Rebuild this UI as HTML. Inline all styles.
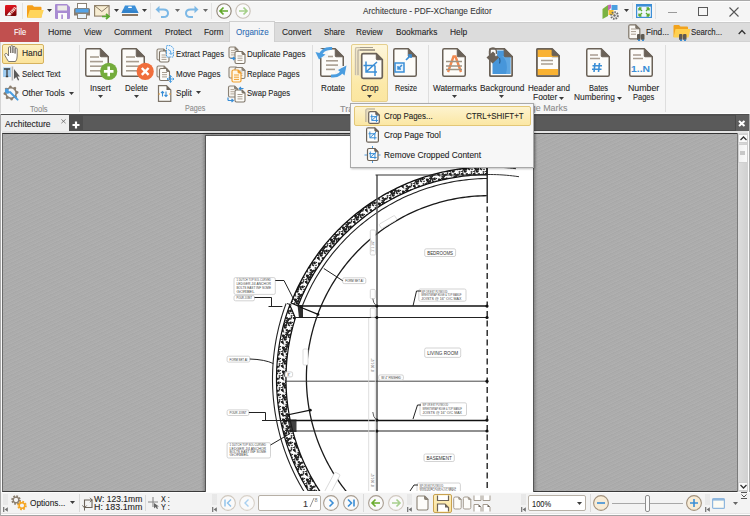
<!DOCTYPE html>
<html><head><meta charset="utf-8"><title>Architecture - PDF-XChange Editor</title><style>*{margin:0;padding:0;box-sizing:border-box}
html,body{width:750px;height:516px;overflow:hidden;background:#f5f5f5}
body{position:relative;font-family:"Liberation Sans",sans-serif;font-size:9.5px;color:#262626}
.a{position:absolute;overflow:visible}
.t{position:absolute;white-space:nowrap;transform-origin:0 50%;-webkit-text-stroke:0.1px currentColor}
</style></head><body>
<div class="a" style="left:0;top:0;width:750px;height:22px;background:#f5f5f5;border-top:1px solid #a9a9a9"></div><div class="a" style="left:0;top:1px;width:750px;height:1px;background:#fdfdfd"></div><div class="a" style="left:0;top:21px;width:750px;height:1px;background:#fdfdfd"></div><svg class="a" style="left:5px;top:5px;" width="12" height="11" viewBox="0 0 12 11"><defs><linearGradient id="gapp" x1="0" y1="0" x2="0.3" y2="1"><stop offset="0" stop-color="#e8161e"/><stop offset="0.55" stop-color="#c0101a"/><stop offset="1" stop-color="#7a0808"/></linearGradient></defs><rect x="0" y="0" width="11.5" height="11" rx="1.3" fill="url(#gapp)"/><path d="M5 9L11 2.5" stroke="#f3d9cf" stroke-width="2.6" stroke-dasharray="1.2 0.6"/><path d="M3.5 8.5L9.5 2" stroke="#fff" stroke-width="0.8" opacity="0.7"/><path d="M1.5 10.5L4.2 7.2L6 10.3Z" fill="#fff"/></svg><div class="a" style="left:22px;top:3px;width:1px;height:16px;background:#e2e2e2"></div><svg class="a" style="left:27px;top:5px;" width="17" height="13" viewBox="0 0 17 13"><path d="M0 1.2Q0 0.2 1 0.2H5.5L7 1.7H13.5Q14.5 1.7 14.5 2.7V12.5H0Z" fill="#f59f1a"/><path d="M0.3 12.7L2.8 5H16.8L14.2 12.7Z" fill="#ffd55a"/></svg><svg class="a" style="left:46.5px;top:9.0px;" width="5" height="3" viewBox="0 0 5 3"><path d="M0 0H5L2.5 3Z" fill="#3c3c3c"/></svg><svg class="a" style="left:55px;top:4px;" width="15" height="15" viewBox="0 0 15 15"><path d="M0 1Q0 0 1 0H12L15 3V14Q15 15 14 15H1Q0 15 0 14Z" fill="#a88bd2"/><rect x="2.5" y="1.5" width="9.5" height="5" fill="#ecebe6"/><rect x="3" y="9" width="9" height="6" fill="#fbfbfb"/><rect x="6.3" y="10.5" width="1.6" height="4.5" fill="#a88bd2"/></svg><svg class="a" style="left:74px;top:3px;" width="16" height="16" viewBox="0 0 16 16"><rect x="3.5" y="0.5" width="9" height="5" fill="#fff" stroke="#8a8276" stroke-width="1"/><path d="M0 6.5Q0 5 1.5 5H14.5Q16 5 16 6.5V12.5H0Z" fill="#877d70"/><rect x="1.5" y="5.8" width="13" height="3.7" fill="#53a3e8"/><rect x="3.5" y="10.5" width="9" height="5" fill="#e8f2fa" stroke="#8a8276" stroke-width="1"/></svg><svg class="a" style="left:94px;top:5px;" width="17" height="14" viewBox="0 0 17 14"><rect x="0.6" y="0.6" width="14.5" height="10.5" fill="#f7edd2" stroke="#8c7d66" stroke-width="1.1"/><path d="M0.8 0.8L7.85 6.5L14.9 0.8" fill="none" stroke="#8c7d66" stroke-width="1"/><path d="M8 11.5H14.5M12 9L15 11.5L12 14" fill="none" stroke="#5aaa30" stroke-width="1.7"/></svg><svg class="a" style="left:113.5px;top:9.0px;" width="5" height="3" viewBox="0 0 5 3"><path d="M0 0H5L2.5 3Z" fill="#3c3c3c"/></svg><svg class="a" style="left:121px;top:5px;" width="18" height="12" viewBox="0 0 18 12"><path d="M4 0.5H14L17.5 8H0.5Z" fill="#3b8fd8"/><path d="M7.5 1.5H10.5L11 3H7Z" fill="#fff"/><path d="M2 4.5L0.5 8H17.5L16.5 6Z" fill="#2f7cc4" opacity="0.7"/><rect x="1" y="9" width="16" height="2" fill="#8a7560"/></svg><svg class="a" style="left:141.5px;top:9.0px;" width="5" height="3" viewBox="0 0 5 3"><path d="M0 0H5L2.5 3Z" fill="#3c3c3c"/></svg><div class="a" style="left:150px;top:3px;width:1px;height:16px;background:#e2e2e2"></div><svg class="a" style="left:155px;top:5px;" width="15" height="13" viewBox="0 0 15 13"><path d="M3 4.5H8.5Q13 4.5 13 8.2Q13 12 8.5 12H6" fill="none" stroke="#7cb8e6" stroke-width="2"/><path d="M0.5 4.5L4.5 0.8V8.2Z" fill="#7cb8e6"/></svg><svg class="a" style="left:174.5px;top:9.0px;" width="5" height="3" viewBox="0 0 5 3"><path d="M0 0H5L2.5 3Z" fill="#6a6a6a"/></svg><svg class="a" style="left:184px;top:5px;" width="15" height="13" viewBox="0 0 15 13"><path d="M12 4.5H6.5Q2 4.5 2 8.2Q2 12 6.5 12H9" fill="none" stroke="#7cb8e6" stroke-width="2"/><path d="M14.5 4.5L10.5 0.8V8.2Z" fill="#7cb8e6"/></svg><svg class="a" style="left:202.5px;top:9.0px;" width="5" height="3" viewBox="0 0 5 3"><path d="M0 0H5L2.5 3Z" fill="#6a6a6a"/></svg><div class="a" style="left:211px;top:3px;width:1px;height:16px;background:#e2e2e2"></div><svg class="a" style="left:216px;top:3px;" width="16" height="16" viewBox="0 0 16 16"><circle cx="8" cy="8" r="7.2" fill="#fafafa" stroke="#8f8476" stroke-width="1.1"/><path d="M4 8H12M7.5 4.5L4 8L7.5 11.5" fill="none" stroke="#62a82a" stroke-width="1.7"/></svg><svg class="a" style="left:235px;top:3px;" width="16" height="16" viewBox="0 0 16 16"><circle cx="8" cy="8" r="7.2" fill="#fafafa" stroke="#c9c1b8" stroke-width="1.1"/><path d="M4 8H12M8.5 4.5L12 8L8.5 11.5" fill="none" stroke="#a6d08a" stroke-width="1.7"/></svg><div class="t" style="left:362.70px;top:4.91px;font-size:9.5px;line-height:11.40px;color:#3a3a3a;transform:scaleX(0.8674);">Architecture - PDF-XChange Editor</div><svg class="a" style="left:602px;top:4px;" width="18" height="16" viewBox="0 0 18 16"><path d="M0.5 5L6 1V12L0.5 15Z" fill="#7bb342"/><path d="M6 1L9 0.5V4L6 7Z" fill="#c86ab0"/><rect x="9.5" y="1" width="6" height="5" fill="#4a9ee0"/><rect x="6.5" y="6" width="5" height="5" fill="#f5c030"/><circle cx="12.5" cy="11.5" r="3.3" fill="none" stroke="#6b6b6b" stroke-width="2" stroke-dasharray="1.5 1"/><circle cx="12.5" cy="11.5" r="1.2" fill="#6b6b6b"/></svg><svg class="a" style="left:623.5px;top:8.5px;" width="5" height="3" viewBox="0 0 5 3"><path d="M0 0H5L2.5 3Z" fill="#3c3c3c"/></svg><div class="a" style="left:632px;top:3px;width:1px;height:16px;background:#e2e2e2"></div><svg class="a" style="left:636px;top:4px;" width="16" height="14" viewBox="0 0 16 14"><rect x="0.6" y="0.6" width="14.8" height="12.8" fill="#eef6fc" stroke="#3c8ed6" stroke-width="1.2"/><rect x="0.6" y="0.6" width="14.8" height="2" fill="#3c8ed6"/><path d="M3 4L6 7M3 4H5.5M3 4V6.5M13 4L10 7M13 4H10.5M13 4V6.5M3 12L6 9M3 12H5.5M3 12V9.5M13 12L10 9M13 12H10.5M13 12V9.5" stroke="#5aaa30" stroke-width="1.4" fill="none"/></svg><div class="a" style="left:655px;top:3px;width:1px;height:16px;background:#e2e2e2"></div><div class="a" style="left:668px;top:12px;width:9px;height:1px;background:#9a9a9a"></div><div class="a" style="left:698px;top:7px;width:10px;height:9px;border:1px solid #5a5a5a"></div><svg class="a" style="left:729px;top:7px;" width="10" height="10" viewBox="0 0 10 10"><path d="M0.5 0.5L9.5 9.5M9.5 0.5L0.5 9.5" stroke="#555" stroke-width="1.1"/></svg><div class="a" style="left:0;top:22px;width:750px;height:20px;background:#dcdcdc;border-top:1px solid #cbcbcb;border-bottom:1px solid #d2d2d2"></div><div class="a" style="left:0;top:22px;width:39px;height:20px;background:#c1504f"></div><div class="t" style="left:13.90px;top:26.01px;font-size:9.5px;line-height:11.40px;color:#ffffff;transform:scaleX(0.7970);">File</div><div class="a" style="left:229px;top:21px;width:46px;height:22px;background:#f5f5f5;border:1px solid #cfcfcf;border-bottom:none"></div><div class="t" style="left:47.70px;top:26.01px;font-size:9.5px;line-height:11.40px;color:#262626;transform:scaleX(0.9234);">Home</div><div class="t" style="left:83.60px;top:26.01px;font-size:9.5px;line-height:11.40px;color:#262626;transform:scaleX(0.8619);">View</div><div class="t" style="left:113.90px;top:26.01px;font-size:9.5px;line-height:11.40px;color:#262626;transform:scaleX(0.9155);">Comment</div><div class="t" style="left:164.50px;top:26.01px;font-size:9.5px;line-height:11.40px;color:#262626;transform:scaleX(0.8805);">Protect</div><div class="t" style="left:203.60px;top:26.01px;font-size:9.5px;line-height:11.40px;color:#262626;transform:scaleX(0.8753);">Form</div><div class="t" style="left:281.70px;top:26.01px;font-size:9.5px;line-height:11.40px;color:#262626;transform:scaleX(0.8808);">Convert</div><div class="t" style="left:323.50px;top:26.01px;font-size:9.5px;line-height:11.40px;color:#262626;transform:scaleX(0.8205);">Share</div><div class="t" style="left:356.30px;top:26.01px;font-size:9.5px;line-height:11.40px;color:#262626;transform:scaleX(0.8572);">Review</div><div class="t" style="left:395.50px;top:26.01px;font-size:9.5px;line-height:11.40px;color:#262626;transform:scaleX(0.8713);">Bookmarks</div><div class="t" style="left:449.70px;top:26.01px;font-size:9.5px;line-height:11.40px;color:#262626;transform:scaleX(0.8854);">Help</div><div class="t" style="left:236.40px;top:26.01px;font-size:9.5px;line-height:11.40px;color:#2f6fb6;transform:scaleX(0.8457);">Organize</div><svg class="a" style="left:628px;top:24px;" width="18" height="17" viewBox="0 0 18 17"><path d="M0.8,2.3 Q0.8,0.8 2.3,0.8 H7.800000000000001 L11.8,4.8 V13.3 Q11.8,14.8 10.3,14.8 H2.3 Q0.8,14.8 0.8,13.3 Z" fill="#fbf9f5" stroke="#7d7468" stroke-width="1.2" stroke-linejoin="round"/><path d="M7.800000000000001,0.8 L11.8,4.8 H8.600000000000001 Q7.800000000000001,4.8 7.800000000000001,4.0 Z" fill="#7d7468" stroke="#7d7468" stroke-width="1" stroke-linejoin="round"/><path d="M3,5.0H8" stroke="#a89d90" stroke-width="1"/><path d="M3,7.6H8" stroke="#a89d90" stroke-width="1"/><path d="M3,10.2H8" stroke="#a89d90" stroke-width="1"/><rect x="9" y="10" width="3.5" height="6" rx="1" fill="#5f5a52"/><rect x="13" y="10" width="3.5" height="6" rx="1" fill="#5f5a52"/><rect x="10" y="15.5" width="2" height="1.5" fill="#3a8ed6"/><rect x="14" y="15.5" width="2" height="1.5" fill="#3a8ed6"/></svg><div class="t" style="left:646.30px;top:25.71px;font-size:9.5px;line-height:11.40px;color:#262626;transform:scaleX(0.8750);">Find...</div><svg class="a" style="left:673px;top:24px;" width="18" height="17" viewBox="0 0 18 17"><path d="M0.5 2Q0.5 1 1.5 1H6L7.5 2.5H14Q15 2.5 15 3.5V13H0.5Z" fill="#f2a31c"/><path d="M0.5 13.5L2.5 5H17.5L15.5 13.5Z" fill="#ffd04f"/><rect x="6" y="10" width="3.5" height="6" rx="1" fill="#5f5a52"/><rect x="10" y="10" width="3.5" height="6" rx="1" fill="#5f5a52"/><rect x="7" y="15.5" width="2" height="1.5" fill="#3a8ed6"/><rect x="11" y="15.5" width="2" height="1.5" fill="#3a8ed6"/></svg><div class="t" style="left:691.40px;top:25.71px;font-size:9.5px;line-height:11.40px;color:#262626;transform:scaleX(0.8206);">Search...</div><svg class="a" style="left:738px;top:29px;" width="8" height="6" viewBox="0 0 8 6"><path d="M0.7 5L4 1.5L7.3 5" fill="none" stroke="#333" stroke-width="1.3"/></svg><div class="a" style="left:0;top:42px;width:750px;height:72px;background:#f6f6f6;border-bottom:1px solid #fdfdfd;border-left:1px solid #d4d4d4"></div><div class="a" style="left:2px;top:44px;width:42px;height:20px;border:1px solid #d6b25e;border-radius:2px;background:linear-gradient(#fdf1c4,#fbe39a)"></div><svg class="a" style="left:4px;top:45px;" width="15" height="18" viewBox="0 0 15 18"><path d="M4.5 16.5Q2.5 13.5 1 10.5Q0.3 9 1.5 8.5Q2.6 8.2 3.5 9.5L4.5 11V3Q4.5 1.8 5.6 1.8Q6.7 1.8 6.7 3V8V1.8Q6.7 0.6 7.8 0.6Q8.9 0.6 8.9 1.8V8V2.5Q8.9 1.3 10 1.3Q11.1 1.3 11.1 2.5V8.5V4Q11.1 3 12.1 3Q13.2 3 13.2 4V11Q13.2 14.5 11.5 16.5Z" fill="#fff" stroke="#6f6a62" stroke-width="0.9" stroke-linejoin="round"/></svg><div class="t" style="left:21.90px;top:47.41px;font-size:9.5px;line-height:11.40px;color:#262626;transform:scaleX(0.8894);">Hand</div><svg class="a" style="left:2px;top:66px;" width="18" height="15" viewBox="0 0 18 15"><rect x="1" y="1.5" width="8" height="9.5" fill="#9fcbef"/><path d="M2 3H8M5 3V10.5M3.8 10.5H6.2" stroke="#3d3d3d" stroke-width="1.3" fill="none"/><rect x="9.6" y="0.5" width="1.6" height="14" fill="#b9b9b9"/><path d="M12 3V13L14.2 11L16 14.5L17.2 14L15.5 10.5H18Z" fill="#5a5a5a"/></svg><div class="t" style="left:21.90px;top:67.71px;font-size:9.5px;line-height:11.40px;color:#262626;transform:scaleX(0.8294);">Select Text</div><svg class="a" style="left:3px;top:85px;" width="16" height="16" viewBox="0 0 16 16"><path d="M15.36,6.54 L15.50,8.00 L13.79,9.15 L13.45,10.26 L14.24,12.17 L13.30,13.30 L11.28,12.91 L10.26,13.45 L9.46,15.36 L8.00,15.50 L6.85,13.79 L5.74,13.45 L3.83,14.24 L2.70,13.30 L3.09,11.28 L2.55,10.26 L0.64,9.46 L0.50,8.00 L2.21,6.85 L2.55,5.74 L1.76,3.83 L2.70,2.70 L4.72,3.09 L5.74,2.55 L6.54,0.64 L8.00,0.50 L9.15,2.21 L10.26,2.55 L12.17,1.76 L13.30,2.70 L12.91,4.72 L13.45,5.74Z" fill="#8b7f70"/><circle cx="8" cy="8" r="4.4" fill="#f6f6f6"/><path d="M7.2 7.2L14.6 14.6" stroke="#4a9de0" stroke-width="2" stroke-linecap="round"/><path d="M3.6 3.2A2.9 2.9 0 1 0 7.6 6.2L6.2 6.4L5.6 5.6L5.8 4.2Z" fill="#4a9de0"/></svg><div class="t" style="left:21.90px;top:87.01px;font-size:9.5px;line-height:11.40px;color:#262626;transform:scaleX(0.8800);">Other Tools</div><svg class="a" style="left:69.0px;top:92.0px;" width="5" height="3" viewBox="0 0 5 3"><path d="M0 0H5L2.5 3Z" fill="#3c3c3c"/></svg><div class="t" style="left:29.90px;top:102.51px;font-size:9.5px;line-height:11.40px;color:#8c8c8c;transform:scaleX(0.7936);">Tools</div><div class="a" style="left:79px;top:45px;width:1px;height:67px;background:#dedede"></div><svg class="a" style="left:84px;top:47px;" width="34" height="34" viewBox="0 0 34 34"><path d="M1.75,3.25 Q1.75,1.75 3.25,1.75 H16.25 L24.25,9.75 V27.75 Q24.25,29.25 22.75,29.25 H3.25 Q1.75,29.25 1.75,27.75 Z" fill="#fdfcf9" stroke="#6b6258" stroke-width="1.5" stroke-linejoin="round"/><path d="M16.25,1.75 L24.25,9.75 H17.05 Q16.25,9.75 16.25,8.95 Z" fill="#6b6258" stroke="#6b6258" stroke-width="1" stroke-linejoin="round"/><path d="M6,10.0H15" stroke="#a89d90" stroke-width="1.6"/><path d="M6,14.6H19" stroke="#a89d90" stroke-width="1.6"/><path d="M6,19.2H19" stroke="#a89d90" stroke-width="1.6"/><path d="M6,23.799999999999997H19" stroke="#a89d90" stroke-width="1.6"/><circle cx="24.7" cy="24.4" r="8.6" fill="#74ac3c"/><path d="M24.7 19.6V29.2M19.9 24.4H29.5" stroke="#fff" stroke-width="2.6"/></svg><div class="t" style="left:89.70px;top:82.01px;font-size:9.5px;line-height:11.40px;color:#262626;transform:scaleX(0.8712);">Insert</div><svg class="a" style="left:97.5px;top:95.0px;" width="5" height="3" viewBox="0 0 5 3"><path d="M0 0H5L2.5 3Z" fill="#3c3c3c"/></svg><svg class="a" style="left:120px;top:47px;" width="34" height="34" viewBox="0 0 34 34"><path d="M1.75,3.25 Q1.75,1.75 3.25,1.75 H16.25 L24.25,9.75 V27.75 Q24.25,29.25 22.75,29.25 H3.25 Q1.75,29.25 1.75,27.75 Z" fill="#fdfcf9" stroke="#6b6258" stroke-width="1.5" stroke-linejoin="round"/><path d="M16.25,1.75 L24.25,9.75 H17.05 Q16.25,9.75 16.25,8.95 Z" fill="#6b6258" stroke="#6b6258" stroke-width="1" stroke-linejoin="round"/><path d="M6,10.0H15" stroke="#a89d90" stroke-width="1.6"/><path d="M6,14.6H19" stroke="#a89d90" stroke-width="1.6"/><path d="M6,19.2H19" stroke="#a89d90" stroke-width="1.6"/><path d="M6,23.799999999999997H19" stroke="#a89d90" stroke-width="1.6"/><circle cx="25.2" cy="24.4" r="8.6" fill="#f06e3c"/><path d="M21.8 21L28.6 27.8M28.6 21L21.8 27.8" stroke="#fff" stroke-width="2.4"/></svg><div class="t" style="left:125.20px;top:82.01px;font-size:9.5px;line-height:11.40px;color:#262626;transform:scaleX(0.8339);">Delete</div><svg class="a" style="left:134.1px;top:95.0px;" width="5" height="3" viewBox="0 0 5 3"><path d="M0 0H5L2.5 3Z" fill="#3c3c3c"/></svg><svg class="a" style="left:156px;top:45px;" width="18" height="18" viewBox="0 0 18 18"><path d="M1,5.5 Q1,4 2.5,4 H7.5 L10.5,7 V13.5 Q10.5,15 9.0,15 H2.5 Q1,15 1,13.5 Z" fill="#f6f3ee" stroke="#8a8175" stroke-width="1.1" stroke-linejoin="round"/><path d="M7.5,4 L10.5,7 H8.3 Q7.5,7 7.5,6.2 Z" fill="#8a8175" stroke="#8a8175" stroke-width="1" stroke-linejoin="round"/><path d="M3.5,7.5 Q3.5,6 5.0,6 H10.0 L13.0,9 V15.5 Q13.0,17 11.5,17 H5.0 Q3.5,17 3.5,15.5 Z" fill="#fdfcf9" stroke="#7d7468" stroke-width="1.1" stroke-linejoin="round"/><path d="M10.0,6 L13.0,9 H10.8 Q10.0,9 10.0,8.2 Z" fill="#7d7468" stroke="#7d7468" stroke-width="1" stroke-linejoin="round"/><path d="M5.5,10.0H10.5" stroke="#a89d90" stroke-width="1"/><path d="M5.5,12.2H10.5" stroke="#a89d90" stroke-width="1"/><path d="M5.5,14.4H10.5" stroke="#a89d90" stroke-width="1"/><path d="M10.5 1.2Q10.5 0.6 11.1 0.6H14.8L17.4 3.2V11.4Q17.4 12 16.8 12H11.1Q10.5 12 10.5 11.4Z" fill="#eef6fd" stroke="#4a9de0" stroke-width="1" stroke-dasharray="1.6 0.8"/><path d="M12 4.5Q15.5 5 15 9M13.5 8L15 9.6L16.5 8" fill="none" stroke="#4a9de0" stroke-width="0.9"/></svg><div class="t" style="left:175.70px;top:48.11px;font-size:9.5px;line-height:11.40px;color:#262626;transform:scaleX(0.8116);">Extract Pages</div><svg class="a" style="left:156px;top:65px;" width="19" height="18" viewBox="0 0 19 18"><path d="M1,2.5 Q1,1 2.5,1 H8 L11,4 V10.5 Q11,12 9.5,12 H2.5 Q1,12 1,10.5 Z" fill="#f6f3ee" stroke="#8a8175" stroke-width="1.1" stroke-linejoin="round"/><path d="M8,1 L11,4 H8.8 Q8,4 8,3.2 Z" fill="#8a8175" stroke="#8a8175" stroke-width="1" stroke-linejoin="round"/><path d="M3.5,5.0 Q3.5,3.5 5.0,3.5 H10.5 L13.5,6.5 V14.0 Q13.5,15.5 12.0,15.5 H5.0 Q3.5,15.5 3.5,14.0 Z" fill="#fdfcf9" stroke="#7d7468" stroke-width="1.1" stroke-linejoin="round"/><path d="M10.5,3.5 L13.5,6.5 H11.3 Q10.5,6.5 10.5,5.7 Z" fill="#7d7468" stroke="#7d7468" stroke-width="1" stroke-linejoin="round"/><path d="M6,7.5H11" stroke="#a89d90" stroke-width="1"/><path d="M6,9.7H11" stroke="#a89d90" stroke-width="1"/><path d="M6,11.9H11" stroke="#a89d90" stroke-width="1"/><path d="M14.5 10.5V17.5M11 14H18" stroke="#4a9de0" stroke-width="1.1"/><path d="M13.2 11.8L14.5 10.5L15.8 11.8M13.2 16.2L14.5 17.5L15.8 16.2M12.3 12.7L11 14L12.3 15.3M16.7 12.7L18 14L16.7 15.3" fill="none" stroke="#4a9de0" stroke-width="0.9"/></svg><div class="t" style="left:175.70px;top:68.21px;font-size:9.5px;line-height:11.40px;color:#262626;transform:scaleX(0.8408);">Move Pages</div><svg class="a" style="left:157px;top:85px;" width="15" height="17" viewBox="0 0 15 17"><path d="M1.5 0.7H9.5L13.8 5V16.3H1.5Z" fill="#fdfcf9" stroke="#7d7468" stroke-width="1.2"/><path d="M9.5 0.7L13.8 5H9.5Z" fill="#6b6258"/><path d="M5.5 11.5V6.5M4 8L5.5 6.5L7 8M9 6.5V11.5M7.5 10L9 11.5L10.5 10" fill="none" stroke="#3a8ed6" stroke-width="1.1"/><path d="M1.5 9H3M12 9H13.8" stroke="#f0a030" stroke-width="1"/></svg><div class="t" style="left:175.70px;top:87.11px;font-size:9.5px;line-height:11.40px;color:#262626;transform:scaleX(0.8495);">Split</div><svg class="a" style="left:196.1px;top:91.0px;" width="5" height="3" viewBox="0 0 5 3"><path d="M0 0H5L2.5 3Z" fill="#3c3c3c"/></svg><svg class="a" style="left:228px;top:46px;" width="18" height="18" viewBox="0 0 18 18"><path d="M1,2.5 Q1,1 2.5,1 H7 L10,4 V10.5 Q10,12 8.5,12 H2.5 Q1,12 1,10.5 Z" fill="#f6f3ee" stroke="#8a8175" stroke-width="1.1" stroke-linejoin="round"/><path d="M7,1 L10,4 H7.8 Q7,4 7,3.2 Z" fill="#8a8175" stroke="#8a8175" stroke-width="1" stroke-linejoin="round"/><path d="M3,4.5H7" stroke="#b5ab9e" stroke-width="1"/><path d="M3,6.7H7" stroke="#b5ab9e" stroke-width="1"/><path d="M3,8.9H7" stroke="#b5ab9e" stroke-width="1"/><path d="M7,7.0 Q7,5.5 8.5,5.5 H14 L17,8.5 V16.0 Q17,17.5 15.5,17.5 H8.5 Q7,17.5 7,16.0 Z" fill="#fdfcf9" stroke="#7d7468" stroke-width="1.1" stroke-linejoin="round"/><path d="M14,5.5 L17,8.5 H14.8 Q14,8.5 14,7.7 Z" fill="#7d7468" stroke="#7d7468" stroke-width="1" stroke-linejoin="round"/><path d="M9.5,10.0H14.5" stroke="#a89d90" stroke-width="1"/><path d="M9.5,12.2H14.5" stroke="#a89d90" stroke-width="1"/><path d="M9.5,14.4H14.5" stroke="#a89d90" stroke-width="1"/><path d="M2.5 12.5H6.5M5 11L6.8 12.5L5 14" fill="none" stroke="#3a8ed6" stroke-width="1.2"/></svg><div class="t" style="left:246.70px;top:48.11px;font-size:9.5px;line-height:11.40px;color:#262626;transform:scaleX(0.8456);">Duplicate Pages</div><svg class="a" style="left:228px;top:66px;" width="18" height="17" viewBox="0 0 18 17"><path d="M1,2.5 Q1,1 2.5,1 H8 L11,4 V10.5 Q11,12 9.5,12 H2.5 Q1,12 1,10.5 Z" fill="#f6f3ee" stroke="#8a8175" stroke-width="1.1" stroke-linejoin="round"/><path d="M8,1 L11,4 H8.8 Q8,4 8,3.2 Z" fill="#8a8175" stroke="#8a8175" stroke-width="1" stroke-linejoin="round"/><path d="M7,3.0 Q7,1.5 8.5,1.5 H14 L17,4.5 V11.0 Q17,12.5 15.5,12.5 H8.5 Q7,12.5 7,11.0 Z" fill="#f6f3ee" stroke="#8a8175" stroke-width="1.1" stroke-linejoin="round"/><path d="M14,1.5 L17,4.5 H14.8 Q14,4.5 14,3.7 Z" fill="#8a8175" stroke="#8a8175" stroke-width="1" stroke-linejoin="round"/><path d="M9.5,5.0H14.5" stroke="#b5ab9e" stroke-width="1"/><path d="M9.5,7.2H14.5" stroke="#b5ab9e" stroke-width="1"/><path d="M9.5,9.4H14.5" stroke="#b5ab9e" stroke-width="1"/><path d="M4,5.5 Q4,4 5.5,4 H10 L13,7 V14.5 Q13,16 11.5,16 H5.5 Q4,16 4,14.5 Z" fill="#fff6e5" stroke="#f0a030" stroke-width="1.2" stroke-linejoin="round"/><path d="M10,4 L13,7 H10.8 Q10,7 10,6.2 Z" fill="#f0a030" stroke="#f0a030" stroke-width="1" stroke-linejoin="round"/><path d="M6,9.0H11" stroke="#f0a030" stroke-width="1"/><path d="M6,11.2H11" stroke="#f0a030" stroke-width="1"/><path d="M6,13.4H11" stroke="#f0a030" stroke-width="1"/></svg><div class="t" style="left:246.70px;top:68.21px;font-size:9.5px;line-height:11.40px;color:#262626;transform:scaleX(0.8148);">Replace Pages</div><svg class="a" style="left:227px;top:85px;" width="19" height="18" viewBox="0 0 19 18"><path d="M1.5,2.5 Q1.5,1 3.0,1 H7.5 L10.5,4 V10.5 Q10.5,12 9.0,12 H3.0 Q1.5,12 1.5,10.5 Z" fill="#f6f3ee" stroke="#8a8175" stroke-width="1.1" stroke-linejoin="round"/><path d="M7.5,1 L10.5,4 H8.3 Q7.5,4 7.5,3.2 Z" fill="#8a8175" stroke="#8a8175" stroke-width="1" stroke-linejoin="round"/><path d="M3.5,4.5H7.5" stroke="#b5ab9e" stroke-width="1"/><path d="M3.5,6.7H7.5" stroke="#b5ab9e" stroke-width="1"/><path d="M3.5,8.9H7.5" stroke="#b5ab9e" stroke-width="1"/><path d="M8,6.5 Q8,5 9.5,5 H15 L18,8 V15.5 Q18,17 16.5,17 H9.5 Q8,17 8,15.5 Z" fill="#fdfcf9" stroke="#7d7468" stroke-width="1.1" stroke-linejoin="round"/><path d="M15,5 L18,8 H15.8 Q15,8 15,7.2 Z" fill="#7d7468" stroke="#7d7468" stroke-width="1" stroke-linejoin="round"/><path d="M10.5,9.5H15.5" stroke="#a89d90" stroke-width="1"/><path d="M10.5,11.7H15.5" stroke="#a89d90" stroke-width="1"/><path d="M10.5,13.9H15.5" stroke="#a89d90" stroke-width="1"/><path d="M16.5 3.5H12.5M14 2L12.3 3.5L14 5" fill="none" stroke="#3a8ed6" stroke-width="1.2"/><path d="M1 15.5H6M4.5 14L6.3 15.5L4.5 17" fill="none" stroke="#3a8ed6" stroke-width="1.2"/><path d="M1 12.5V15.5" stroke="#3a8ed6" stroke-width="1.2"/></svg><div class="t" style="left:246.70px;top:87.11px;font-size:9.5px;line-height:11.40px;color:#262626;transform:scaleX(0.8061);">Swap Pages</div><div class="t" style="left:185.00px;top:101.81px;font-size:9.5px;line-height:11.40px;color:#8c8c8c;transform:scaleX(0.7536);">Pages</div><div class="a" style="left:312px;top:45px;width:1px;height:67px;background:#dedede"></div><svg class="a" style="left:314px;top:46px;" width="34" height="33" viewBox="0 0 34 33"><path d="M6.75,4.25 Q6.75,2.75 8.25,2.75 H21.25 L29.25,10.75 V28.75 Q29.25,30.25 27.75,30.25 H8.25 Q6.75,30.25 6.75,28.75 Z" fill="#fdfcf9" stroke="#6b6258" stroke-width="1.5" stroke-linejoin="round"/><path d="M21.25,2.75 L29.25,10.75 H22.05 Q21.25,10.75 21.25,9.95 Z" fill="#6b6258" stroke="#6b6258" stroke-width="1" stroke-linejoin="round"/><path d="M12,10.5H19" stroke="#a89d90" stroke-width="1.6"/><path d="M12,14.8H24" stroke="#a89d90" stroke-width="1.6"/><path d="M12,19.1H24" stroke="#a89d90" stroke-width="1.6"/><path d="M12,23.4H21" stroke="#a89d90" stroke-width="1.6"/><rect x="2" y="3" width="12" height="9" fill="#f5f5f5"/><rect x="21" y="20" width="12" height="11" fill="#f5f5f5"/><path d="M6 9.5Q9 1.5 18 2.5" fill="none" stroke="#4a9de0" stroke-width="3"/><path d="M1.5 6L11.5 8.5L5 13.5Z" fill="#4a9de0"/><path d="M29 22.5Q27 31 17 30" fill="none" stroke="#4a9de0" stroke-width="3"/><path d="M32.5 19.5L30.5 29.5L24 24Z" fill="#4a9de0"/></svg><div class="t" style="left:321.20px;top:81.51px;font-size:9.5px;line-height:11.40px;color:#262626;transform:scaleX(0.8574);">Rotate</div><div class="a" style="left:351px;top:44px;width:37px;height:58px;border:1px solid #e5cf8e;border-radius:2px;background:linear-gradient(#fdf6dc,#fce9a8 70%,#fbe6a0)"></div><svg class="a" style="left:354px;top:46px;" width="30" height="34" viewBox="0 0 30 34"><path d="M1.5 29V3Q1.5 1.5 3 1.5H19" fill="none" stroke="#a8a090" stroke-width="1.2"/><path d="M4 29V5Q4 4 5 4H21" fill="none" stroke="#8d8478" stroke-width="1.3"/><rect x="1" y="1" width="5" height="29" fill="#e5dcc5" opacity="0.5"/><path d="M7.7,9.2 Q7.7,7.7 9.2,7.7 H22.3 L28.3,13.7 V30.800000000000004 Q28.3,32.300000000000004 26.8,32.300000000000004 H9.2 Q7.7,32.300000000000004 7.7,30.800000000000004 Z" fill="#fdfcf9" stroke="#6b6258" stroke-width="1.7" stroke-linejoin="round"/><path d="M22.3,7.7 L28.3,13.7 H23.1 Q22.3,13.7 22.3,12.899999999999999 Z" fill="#6b6258" stroke="#6b6258" stroke-width="1" stroke-linejoin="round"/><path d="M9.5 19.5H21M12 15.5V26H23M21 19.5V30M12 26L23 16" fill="none" stroke="#3a8ed6" stroke-width="1.5"/></svg><div class="t" style="left:360.90px;top:81.51px;font-size:9.5px;line-height:11.40px;color:#262626;transform:scaleX(0.8547);">Crop</div><svg class="a" style="left:367.0px;top:95.0px;" width="5" height="3" viewBox="0 0 5 3"><path d="M0 0H5L2.5 3Z" fill="#3c3c3c"/></svg><svg class="a" style="left:392px;top:47px;" width="25" height="31" viewBox="0 0 25 31"><path d="M1.75,3.25 Q1.75,1.75 3.25,1.75 H16.25 L24.25,9.75 V27.75 Q24.25,29.25 22.75,29.25 H3.25 Q1.75,29.25 1.75,27.75 Z" fill="#fdfcf9" stroke="#6b6258" stroke-width="1.5" stroke-linejoin="round"/><path d="M16.25,1.75 L24.25,9.75 H17.05 Q16.25,9.75 16.25,8.95 Z" fill="#6b6258" stroke="#6b6258" stroke-width="1" stroke-linejoin="round"/><rect x="3" y="16" width="9" height="9" fill="#e8f3fc" stroke="#3a8ed6" stroke-width="1.5"/><path d="M10 18L6 22M6 19V22H9" fill="none" stroke="#3a8ed6" stroke-width="1.5"/><path d="M14 13L19 8M16 8H19V11" fill="none" stroke="#3a8ed6" stroke-width="1.7"/></svg><div class="t" style="left:394.80px;top:81.51px;font-size:9.5px;line-height:11.40px;color:#262626;transform:scaleX(0.7610);">Resize</div><div class="t" style="left:340.40px;top:102.61px;font-size:9.5px;line-height:11.40px;color:#8c8c8c;transform:scaleX(0.9457);">Transform</div><div class="a" style="left:428px;top:45px;width:1px;height:67px;background:#dedede"></div><svg class="a" style="left:441px;top:47px;" width="26" height="31" viewBox="0 0 26 31"><path d="M1.75,3.25 Q1.75,1.75 3.25,1.75 H16.25 L24.25,9.75 V27.75 Q24.25,29.25 22.75,29.25 H3.25 Q1.75,29.25 1.75,27.75 Z" fill="#fdfcf9" stroke="#6b6258" stroke-width="1.5" stroke-linejoin="round"/><path d="M16.25,1.75 L24.25,9.75 H17.05 Q16.25,9.75 16.25,8.95 Z" fill="#6b6258" stroke="#6b6258" stroke-width="1" stroke-linejoin="round"/><path d="M7 25L12.5 9.5H14.5L20 25" fill="none" stroke="#f28a50" stroke-width="2.4"/><path d="M5 14.5H21M5 19H21M5 22.5H21" stroke="#9d9385" stroke-width="1.4"/></svg><div class="t" style="left:432.70px;top:81.51px;font-size:9.5px;line-height:11.40px;color:#262626;transform:scaleX(0.8614);">Watermarks</div><svg class="a" style="left:452.1px;top:95.0px;" width="5" height="3" viewBox="0 0 5 3"><path d="M0 0H5L2.5 3Z" fill="#3c3c3c"/></svg><svg class="a" style="left:484px;top:45px;" width="31" height="33" viewBox="0 0 31 33"><path d="M5.75,5.25 Q5.75,3.75 7.25,3.75 H20.25 L28.25,11.75 V29.75 Q28.25,31.25 26.75,31.25 H7.25 Q5.75,31.25 5.75,29.75 Z" fill="#fdfcf9" stroke="#6b6258" stroke-width="1.5" stroke-linejoin="round"/><path d="M20.25,3.75 L28.25,11.75 H21.05 Q20.25,11.75 20.25,10.95 Z" fill="#6b6258" stroke="#6b6258" stroke-width="1" stroke-linejoin="round"/><path d="M13 5.5H20L26.5 12V29H8.5V17Q12 15 13 10Q13.5 7 13 5.5Z" fill="#4796da"/><path d="M18 11Q25 16 22 29H26.5V12Z" fill="#6aaee6" opacity="0.7"/><path d="M5.75,5.25 Q5.75,3.75 7.25,3.75 H20.25 L28.25,11.75 V29.75 Q28.25,31.25 26.75,31.25 H7.25 Q5.75,31.25 5.75,29.75 Z" fill="none" stroke="#6b6258" stroke-width="1.5" stroke-linejoin="round"/><path d="M20.25,3.75 L28.25,11.75 H21.05 Q20.25,11.75 20.25,10.95 Z" fill="#6b6258" stroke="#6b6258" stroke-width="1" stroke-linejoin="round"/><path d="M2.5 12.5L9 6.5L15 12.5L8.5 18.5Z" fill="#6b6258"/><path d="M5.5 9.5Q4.5 3 9 3Q13 3 12.5 9" fill="none" stroke="#6b6258" stroke-width="1.4"/><circle cx="12" cy="10" r="1.2" fill="#fff" opacity="0.7"/><path d="M15.5 13Q16.5 16 15.5 18.5" stroke="#2a5f8f" stroke-width="1.2" fill="none"/></svg><div class="t" style="left:479.70px;top:81.51px;font-size:9.5px;line-height:11.40px;color:#262626;transform:scaleX(0.8777);">Background</div><svg class="a" style="left:499.3px;top:95.0px;" width="5" height="3" viewBox="0 0 5 3"><path d="M0 0H5L2.5 3Z" fill="#3c3c3c"/></svg><svg class="a" style="left:535px;top:47px;" width="26" height="31" viewBox="0 0 26 31"><path d="M1.75,3.25 Q1.75,1.75 3.25,1.75 H16.25 L24.25,9.75 V27.75 Q24.25,29.25 22.75,29.25 H3.25 Q1.75,29.25 1.75,27.75 Z" fill="#fdfcf9" stroke="#6b6258" stroke-width="1.5" stroke-linejoin="round"/><path d="M16.25,1.75 L24.25,9.75 H17.05 Q16.25,9.75 16.25,8.95 Z" fill="#6b6258" stroke="#6b6258" stroke-width="1" stroke-linejoin="round"/><path d="M2 2H16L23 9V10H2Z" fill="#f9b233"/><rect x="2" y="22" width="21" height="6" fill="#f9b233"/><path d="M6 13.5H18M6 17H18" stroke="#a89d90" stroke-width="1.5"/><path d="M1.85,3.35 Q1.85,1.85 3.35,1.85 H17.150000000000002 L24.150000000000002,8.85 V27.650000000000002 Q24.150000000000002,29.150000000000002 22.650000000000002,29.150000000000002 H3.35 Q1.85,29.150000000000002 1.85,27.650000000000002 Z" fill="none" stroke="#6b6258" stroke-width="1.7" stroke-linejoin="round"/><path d="M17.150000000000002,1.85 L24.150000000000002,8.85 H17.950000000000003 Q17.150000000000002,8.85 17.150000000000002,8.049999999999999 Z" fill="#6b6258" stroke="#6b6258" stroke-width="1" stroke-linejoin="round"/></svg><div class="t" style="left:528.10px;top:82.11px;font-size:9.5px;line-height:11.40px;color:#262626;transform:scaleX(0.8459);">Header and</div><div class="t" style="left:533.20px;top:91.11px;font-size:9.5px;line-height:11.40px;color:#262626;transform:scaleX(0.8850);">Footer</div><svg class="a" style="left:559.0px;top:96.5px;" width="5" height="3" viewBox="0 0 5 3"><path d="M0 0H5L2.5 3Z" fill="#3c3c3c"/></svg><svg class="a" style="left:585px;top:47px;" width="26" height="31" viewBox="0 0 26 31"><path d="M1.75,3.25 Q1.75,1.75 3.25,1.75 H16.25 L24.25,9.75 V27.75 Q24.25,29.25 22.75,29.25 H3.25 Q1.75,29.25 1.75,27.75 Z" fill="#fdfcf9" stroke="#6b6258" stroke-width="1.5" stroke-linejoin="round"/><path d="M16.25,1.75 L24.25,9.75 H17.05 Q16.25,9.75 16.25,8.95 Z" fill="#6b6258" stroke="#6b6258" stroke-width="1" stroke-linejoin="round"/><path d="M5,8.0H13" stroke="#a89d90" stroke-width="1.5"/><path d="M5,11.5H15" stroke="#a89d90" stroke-width="1.5"/><path d="M10 16L9 25M14.5 16L13.5 25M7.5 18.7H17M7 22.3H16.5" stroke="#3a8ed6" stroke-width="1.6"/></svg><div class="t" style="left:588.70px;top:82.11px;font-size:9.5px;line-height:11.40px;color:#262626;transform:scaleX(0.7862);">Bates</div><div class="t" style="left:573.70px;top:91.11px;font-size:9.5px;line-height:11.40px;color:#262626;transform:scaleX(0.8780);">Numbering</div><svg class="a" style="left:616.5px;top:96.5px;" width="5" height="3" viewBox="0 0 5 3"><path d="M0 0H5L2.5 3Z" fill="#3c3c3c"/></svg><svg class="a" style="left:628px;top:47px;" width="26" height="31" viewBox="0 0 26 31"><path d="M1.75,3.25 Q1.75,1.75 3.25,1.75 H16.25 L24.25,9.75 V27.75 Q24.25,29.25 22.75,29.25 H3.25 Q1.75,29.25 1.75,27.75 Z" fill="#fdfcf9" stroke="#6b6258" stroke-width="1.5" stroke-linejoin="round"/><path d="M16.25,1.75 L24.25,9.75 H17.05 Q16.25,9.75 16.25,8.95 Z" fill="#6b6258" stroke="#6b6258" stroke-width="1" stroke-linejoin="round"/><path d="M5,8.0H13" stroke="#a89d90" stroke-width="1.5"/><path d="M5,11.5H15" stroke="#a89d90" stroke-width="1.5"/><text x="12.5" y="25" text-anchor="middle" font-family="Liberation Sans" font-size="9" font-weight="bold" fill="#3a8ed6" textLength="19" lengthAdjust="spacingAndGlyphs">1..N</text></svg><div class="t" style="left:627.70px;top:82.11px;font-size:9.5px;line-height:11.40px;color:#262626;transform:scaleX(0.9263);">Number</div><div class="t" style="left:632.60px;top:91.11px;font-size:9.5px;line-height:11.40px;color:#262626;transform:scaleX(0.7907);">Pages</div><div class="t" style="left:519.50px;top:101.71px;font-size:9.5px;line-height:11.40px;color:#8c8c8c;transform:scaleX(0.9351);">Page Marks</div><div class="a" style="left:665px;top:45px;width:1px;height:67px;background:#dedede"></div><div class="a" style="left:0;top:114px;width:750px;height:17px;background:#5a5a5a;border-top:2px solid #4f4f4f;border-bottom:1px solid #4a4a4a"></div><div class="a" style="left:69px;top:115px;width:14px;height:16px;background:#4d4d4d"></div><div class="a" style="left:0;top:115px;width:69px;height:16px;background:#efefef"></div><div class="t" style="left:5.40px;top:117.81px;font-size:9.5px;line-height:11.40px;color:#1e1e1e;transform:scaleX(0.8996);">Architecture</div><svg class="a" style="left:60.5px;top:118.8px;" width="5" height="4.6" viewBox="0 0 5 4.6"><path d="M0.4 0.4L4.6 4.2M4.6 0.4L0.4 4.2" stroke="#666" stroke-width="0.8"/></svg><svg class="a" style="left:71.5px;top:120.5px;" width="8" height="8" viewBox="0 0 8 8"><path d="M4 0.5V7.5M0.5 4H7.5" stroke="#fff" stroke-width="2.2"/></svg><div class="a" style="left:735px;top:115px;width:14px;height:16px;background:#5f5f5f;border-left:1px solid #4a4a4a"></div><svg class="a" style="left:737.5px;top:120.3px;" width="7.5" height="7" viewBox="0 0 7.5 7"><path d="M1 1L6.5 6M6.5 1L1 6" stroke="#fff" stroke-width="2"/></svg><div class="a" style="left:0;top:131px;width:750px;height:2px;background:#e4e4e4"></div><div class="a" style="left:2px;top:133px;width:735px;height:359px;background-color:#acacac;background-image:repeating-linear-gradient(155deg,rgba(255,255,255,0.04) 0 1px,rgba(0,0,0,0.02) 1px 2px,transparent 2px 3.5px);border-top:1px solid #353535;border-left:1px solid #6a6a6a;border-bottom:1px solid #3a3a3a"></div><div class="a" style="left:0;top:114px;width:1px;height:402px;background:#a9a9a9"></div><div class="a" style="left:1px;top:131px;width:1px;height:385px;background:#fbfbfb"></div><div class="a" style="left:206px;top:136px;width:327px;height:360px;background:#fff;box-shadow:0 0 0 1px #555,0 0 3px 2px rgba(0,0,0,0.28)"></div><svg class="a" style="left:0;top:0" width="750" height="516"><defs><clipPath id="pc"><rect x="206" y="136" width="327" height="355"/></clipPath><pattern id="spk" width="12" height="12" patternUnits="userSpaceOnUse"><rect width="12" height="12" fill="#fff"/><g fill="#1a1a1a"><rect x="2.9" y="6.5" width="1.5" height="1.3" transform="rotate(113 2.9 6.5)"/><rect x="14.9" y="6.5" width="1.5" height="1.3" transform="rotate(113 14.9 6.5)"/><rect x="0.8" y="0.2" width="2.2" height="1.0" transform="rotate(42 0.8 0.2)"/><rect x="0.8" y="12.2" width="2.2" height="1.0" transform="rotate(42 0.8 12.2)"/><rect x="12.8" y="0.2" width="2.2" height="1.0" transform="rotate(42 12.8 0.2)"/><rect x="12.8" y="12.2" width="2.2" height="1.0" transform="rotate(42 12.8 12.2)"/><rect x="-0.1" y="5.6" width="2.2" height="1.2" transform="rotate(115 -0.1 5.6)"/><rect x="11.9" y="5.6" width="2.2" height="1.2" transform="rotate(115 11.9 5.6)"/><rect x="1.8" y="7.6" width="2.2" height="1.3" transform="rotate(133 1.8 7.6)"/><rect x="13.8" y="7.6" width="2.2" height="1.3" transform="rotate(133 13.8 7.6)"/><rect x="8.1" y="0.8" width="2.0" height="1.3" transform="rotate(54 8.1 0.8)"/><rect x="8.1" y="12.8" width="2.0" height="1.3" transform="rotate(54 8.1 12.8)"/><rect x="0.4" y="-1.6" width="1.6" height="1.4" transform="rotate(158 0.4 -1.6)"/><rect x="0.4" y="10.4" width="1.6" height="1.4" transform="rotate(158 0.4 10.4)"/><rect x="12.4" y="-1.6" width="1.6" height="1.4" transform="rotate(158 12.4 -1.6)"/><rect x="12.4" y="10.4" width="1.6" height="1.4" transform="rotate(158 12.4 10.4)"/><rect x="8.6" y="-0.9" width="1.5" height="1.5" transform="rotate(80 8.6 -0.9)"/><rect x="8.6" y="11.1" width="1.5" height="1.5" transform="rotate(80 8.6 11.1)"/><rect x="-0.8" y="-1.5" width="1.0" height="0.9" transform="rotate(39 -0.8 -1.5)"/><rect x="-0.8" y="10.5" width="1.0" height="0.9" transform="rotate(39 -0.8 10.5)"/><rect x="11.2" y="-1.5" width="1.0" height="0.9" transform="rotate(39 11.2 -1.5)"/><rect x="11.2" y="10.5" width="1.0" height="0.9" transform="rotate(39 11.2 10.5)"/><rect x="-0.4" y="5.2" width="1.8" height="1.1" transform="rotate(91 -0.4 5.2)"/><rect x="11.6" y="5.2" width="1.8" height="1.1" transform="rotate(91 11.6 5.2)"/><rect x="4.6" y="4.2" width="1.8" height="1.3" transform="rotate(163 4.6 4.2)"/><rect x="8.2" y="-0.9" width="2.2" height="1.7" transform="rotate(121 8.2 -0.9)"/><rect x="8.2" y="11.1" width="2.2" height="1.7" transform="rotate(121 8.2 11.1)"/><rect x="2.0" y="-1.7" width="2.3" height="1.6" transform="rotate(102 2.0 -1.7)"/><rect x="2.0" y="10.3" width="2.3" height="1.6" transform="rotate(102 2.0 10.3)"/><rect x="14.0" y="-1.7" width="2.3" height="1.6" transform="rotate(102 14.0 -1.7)"/><rect x="14.0" y="10.3" width="2.3" height="1.6" transform="rotate(102 14.0 10.3)"/><rect x="8.6" y="2.5" width="2.1" height="1.3" transform="rotate(51 8.6 2.5)"/><rect x="8.6" y="14.5" width="2.1" height="1.3" transform="rotate(51 8.6 14.5)"/><rect x="0.8" y="-1.8" width="2.4" height="0.9" transform="rotate(144 0.8 -1.8)"/><rect x="0.8" y="10.2" width="2.4" height="0.9" transform="rotate(144 0.8 10.2)"/><rect x="12.8" y="-1.8" width="2.4" height="0.9" transform="rotate(144 12.8 -1.8)"/><rect x="12.8" y="10.2" width="2.4" height="0.9" transform="rotate(144 12.8 10.2)"/><rect x="4.9" y="1.8" width="1.3" height="1.5" transform="rotate(157 4.9 1.8)"/><rect x="4.9" y="13.8" width="1.3" height="1.5" transform="rotate(157 4.9 13.8)"/><rect x="0.5" y="7.4" width="1.0" height="1.4" transform="rotate(60 0.5 7.4)"/><rect x="12.5" y="7.4" width="1.0" height="1.4" transform="rotate(60 12.5 7.4)"/><rect x="-1.4" y="-0.2" width="1.7" height="1.7" transform="rotate(56 -1.4 -0.2)"/><rect x="-1.4" y="11.8" width="1.7" height="1.7" transform="rotate(56 -1.4 11.8)"/><rect x="10.6" y="-0.2" width="1.7" height="1.7" transform="rotate(56 10.6 -0.2)"/><rect x="10.6" y="11.8" width="1.7" height="1.7" transform="rotate(56 10.6 11.8)"/><rect x="0.9" y="7.2" width="0.9" height="1.0" transform="rotate(73 0.9 7.2)"/><rect x="12.9" y="7.2" width="0.9" height="1.0" transform="rotate(73 12.9 7.2)"/><rect x="7.3" y="1.9" width="1.0" height="1.6" transform="rotate(56 7.3 1.9)"/><rect x="7.3" y="13.9" width="1.0" height="1.6" transform="rotate(56 7.3 13.9)"/><rect x="-0.5" y="-1.2" width="1.5" height="1.2" transform="rotate(94 -0.5 -1.2)"/><rect x="-0.5" y="10.8" width="1.5" height="1.2" transform="rotate(94 -0.5 10.8)"/><rect x="11.5" y="-1.2" width="1.5" height="1.2" transform="rotate(94 11.5 -1.2)"/><rect x="11.5" y="10.8" width="1.5" height="1.2" transform="rotate(94 11.5 10.8)"/><rect x="7.7" y="7.1" width="1.7" height="1.4" transform="rotate(169 7.7 7.1)"/><rect x="6.1" y="5.2" width="2.0" height="1.0" transform="rotate(54 6.1 5.2)"/><rect x="-0.3" y="6.3" width="1.7" height="0.8" transform="rotate(75 -0.3 6.3)"/><rect x="11.7" y="6.3" width="1.7" height="0.8" transform="rotate(75 11.7 6.3)"/><rect x="7.0" y="0.2" width="1.8" height="1.4" transform="rotate(11 7.0 0.2)"/><rect x="7.0" y="12.2" width="1.8" height="1.4" transform="rotate(11 7.0 12.2)"/><rect x="7.5" y="5.6" width="1.9" height="1.1" transform="rotate(127 7.5 5.6)"/><rect x="8.9" y="0.3" width="1.0" height="1.4" transform="rotate(173 8.9 0.3)"/><rect x="8.9" y="12.3" width="1.0" height="1.4" transform="rotate(173 8.9 12.3)"/><rect x="3.0" y="5.5" width="1.8" height="1.1" transform="rotate(66 3.0 5.5)"/><rect x="3.8" y="4.4" width="1.8" height="1.1" transform="rotate(68 3.8 4.4)"/><rect x="-2.7" y="0.3" width="1.8" height="1.5" transform="rotate(56 -2.7 0.3)"/><rect x="-2.7" y="12.3" width="1.8" height="1.5" transform="rotate(56 -2.7 12.3)"/><rect x="9.3" y="0.3" width="1.8" height="1.5" transform="rotate(56 9.3 0.3)"/><rect x="9.3" y="12.3" width="1.8" height="1.5" transform="rotate(56 9.3 12.3)"/><rect x="2.7" y="-2.4" width="1.3" height="1.0" transform="rotate(78 2.7 -2.4)"/><rect x="2.7" y="9.6" width="1.3" height="1.0" transform="rotate(78 2.7 9.6)"/><rect x="14.7" y="-2.4" width="1.3" height="1.0" transform="rotate(78 14.7 -2.4)"/><rect x="14.7" y="9.6" width="1.3" height="1.0" transform="rotate(78 14.7 9.6)"/><rect x="8.4" y="1.2" width="1.4" height="1.1" transform="rotate(150 8.4 1.2)"/><rect x="8.4" y="13.2" width="1.4" height="1.1" transform="rotate(150 8.4 13.2)"/><rect x="5.3" y="-1.7" width="1.2" height="1.1" transform="rotate(117 5.3 -1.7)"/><rect x="5.3" y="10.3" width="1.2" height="1.1" transform="rotate(117 5.3 10.3)"/><rect x="-1.4" y="5.4" width="1.2" height="0.9" transform="rotate(95 -1.4 5.4)"/><rect x="10.6" y="5.4" width="1.2" height="0.9" transform="rotate(95 10.6 5.4)"/><rect x="2.3" y="-2.3" width="2.2" height="1.0" transform="rotate(50 2.3 -2.3)"/><rect x="2.3" y="9.7" width="2.2" height="1.0" transform="rotate(50 2.3 9.7)"/><rect x="14.3" y="-2.3" width="2.2" height="1.0" transform="rotate(50 14.3 -2.3)"/><rect x="14.3" y="9.7" width="2.2" height="1.0" transform="rotate(50 14.3 9.7)"/><rect x="-2.3" y="7.7" width="2.1" height="1.1" transform="rotate(23 -2.3 7.7)"/><rect x="9.7" y="7.7" width="2.1" height="1.1" transform="rotate(23 9.7 7.7)"/><rect x="3.5" y="-2.5" width="1.3" height="1.1" transform="rotate(75 3.5 -2.5)"/><rect x="3.5" y="9.5" width="1.3" height="1.1" transform="rotate(75 3.5 9.5)"/><rect x="5.0" y="4.9" width="2.3" height="0.9" transform="rotate(1 5.0 4.9)"/><rect x="-0.7" y="-1.4" width="2.4" height="1.2" transform="rotate(171 -0.7 -1.4)"/><rect x="-0.7" y="10.6" width="2.4" height="1.2" transform="rotate(171 -0.7 10.6)"/><rect x="11.3" y="-1.4" width="2.4" height="1.2" transform="rotate(171 11.3 -1.4)"/><rect x="11.3" y="10.6" width="2.4" height="1.2" transform="rotate(171 11.3 10.6)"/><rect x="-0.9" y="2.7" width="2.0" height="1.6" transform="rotate(119 -0.9 2.7)"/><rect x="-0.9" y="14.7" width="2.0" height="1.6" transform="rotate(119 -0.9 14.7)"/><rect x="11.1" y="2.7" width="2.0" height="1.6" transform="rotate(119 11.1 2.7)"/><rect x="11.1" y="14.7" width="2.0" height="1.6" transform="rotate(119 11.1 14.7)"/><rect x="6.2" y="3.5" width="1.4" height="1.0" transform="rotate(12 6.2 3.5)"/><rect x="7.1" y="3.4" width="2.1" height="0.8" transform="rotate(163 7.1 3.4)"/><rect x="8.3" y="-0.9" width="2.2" height="1.6" transform="rotate(104 8.3 -0.9)"/><rect x="8.3" y="11.1" width="2.2" height="1.6" transform="rotate(104 8.3 11.1)"/><rect x="0.2" y="8.9" width="1.2" height="1.1" transform="rotate(119 0.2 8.9)"/><rect x="12.2" y="8.9" width="1.2" height="1.1" transform="rotate(119 12.2 8.9)"/><rect x="6.3" y="5.0" width="2.3" height="1.4" transform="rotate(61 6.3 5.0)"/><rect x="3.0" y="-1.7" width="1.6" height="1.5" transform="rotate(63 3.0 -1.7)"/><rect x="3.0" y="10.3" width="1.6" height="1.5" transform="rotate(63 3.0 10.3)"/><rect x="2.4" y="6.4" width="2.1" height="1.0" transform="rotate(143 2.4 6.4)"/><rect x="14.4" y="6.4" width="2.1" height="1.0" transform="rotate(143 14.4 6.4)"/><rect x="-0.9" y="-2.3" width="2.1" height="0.8" transform="rotate(113 -0.9 -2.3)"/><rect x="-0.9" y="9.7" width="2.1" height="0.8" transform="rotate(113 -0.9 9.7)"/><rect x="11.1" y="-2.3" width="2.1" height="0.8" transform="rotate(113 11.1 -2.3)"/><rect x="11.1" y="9.7" width="2.1" height="0.8" transform="rotate(113 11.1 9.7)"/><rect x="-1.6" y="0.6" width="1.3" height="1.0" transform="rotate(95 -1.6 0.6)"/><rect x="-1.6" y="12.6" width="1.3" height="1.0" transform="rotate(95 -1.6 12.6)"/><rect x="10.4" y="0.6" width="1.3" height="1.0" transform="rotate(95 10.4 0.6)"/><rect x="10.4" y="12.6" width="1.3" height="1.0" transform="rotate(95 10.4 12.6)"/><rect x="5.1" y="5.7" width="2.1" height="0.8" transform="rotate(10 5.1 5.7)"/><rect x="1.5" y="1.5" width="1.0" height="1.7" transform="rotate(154 1.5 1.5)"/><rect x="1.5" y="13.5" width="1.0" height="1.7" transform="rotate(154 1.5 13.5)"/><rect x="13.5" y="1.5" width="1.0" height="1.7" transform="rotate(154 13.5 1.5)"/><rect x="13.5" y="13.5" width="1.0" height="1.7" transform="rotate(154 13.5 13.5)"/><rect x="1.0" y="6.0" width="1.4" height="1.1" transform="rotate(63 1.0 6.0)"/><rect x="13.0" y="6.0" width="1.4" height="1.1" transform="rotate(63 13.0 6.0)"/><rect x="7.8" y="7.0" width="1.4" height="1.0" transform="rotate(59 7.8 7.0)"/></g></pattern></defs><g clip-path="url(#pc)"><path d="M487.00,167.01 L483.99,167.06 L480.97,167.15 L477.96,167.29 L474.95,167.47 L471.94,167.69 L468.94,167.95 L465.94,168.26 L462.94,168.61 L459.95,169.00 L456.97,169.43 L453.99,169.91 L451.02,170.43 L448.06,170.99 L445.11,171.59 L442.16,172.24 L439.23,172.93 L436.30,173.65 L433.38,174.43 L430.48,175.24 L427.59,176.09 L424.71,176.98 L421.84,177.92 L418.99,178.89 L416.15,179.91 L413.33,180.97 L410.52,182.06 L407.72,183.20 L404.95,184.37 L402.19,185.59 L399.45,186.84 L396.72,188.14 L394.02,189.47 L391.33,190.84 L388.67,192.25 L386.02,193.69 L383.39,195.18 L380.79,196.70 L378.21,198.25 L375.65,199.85 L373.11,201.48 L370.60,203.14 L368.11,204.85 L365.65,206.58 L363.21,208.35 L360.79,210.16 L358.40,212.00 L356.04,213.88 L353.71,215.78 L351.40,217.72 L349.12,219.70 L346.87,221.70 L344.65,223.74 L342.45,225.81 L340.29,227.91 L338.15,230.04 L336.05,232.20 L333.98,234.39 L331.94,236.61 L329.93,238.86 L327.95,241.13 L326.01,243.44 L324.09,245.77 L322.22,248.13 L320.37,250.51 L318.56,252.93 L316.79,255.36 L315.05,257.82 L313.34,260.31 L311.67,262.82 L310.03,265.35 L308.44,267.91 L306.87,270.49 L305.35,273.09 L303.86,275.71 L302.41,278.36 L301.00,281.02 L299.62,283.71 L298.29,286.41 L296.99,289.13 L295.73,291.87 L294.51,294.63 L293.33,297.40 L292.19,300.19 L291.09,303.00 L297.97,306.00 L299.07,303.19 L300.21,300.39 L301.39,297.61 L302.62,294.85 L303.88,292.11 L305.18,289.38 L306.52,286.68 L307.91,284.00 L309.33,281.33 L310.79,278.69 L312.29,276.07 L313.83,273.47 L315.41,270.90 L317.02,268.35 L318.68,265.82 L320.37,263.32 L322.09,260.84 L323.85,258.39 L325.65,255.96 L327.49,253.56 L329.36,251.19 L331.26,248.85 L333.20,246.54 L335.17,244.25 L337.18,241.99 L339.22,239.77 L341.29,237.57 L343.40,235.40 L345.53,233.27 L347.70,231.17 L349.90,229.10 L352.13,227.06 L354.38,225.06 L356.67,223.09 L358.99,221.15 L361.33,219.25 L363.71,217.38 L366.11,215.55 L368.53,213.75 L370.99,211.99 L373.46,210.26 L375.97,208.58 L378.50,206.93 L381.05,205.31 L383.63,203.74 L386.22,202.20 L388.85,200.70 L391.49,199.24 L394.15,197.82 L396.84,196.44 L399.55,195.10 L402.27,193.80 L405.01,192.54 L407.78,191.32 L410.56,190.14 L413.35,189.01 L416.17,187.91 L419.00,186.86 L421.84,185.84 L424.70,184.87 L427.57,183.94 L430.46,183.06 L433.36,182.22 L436.27,181.41 L439.19,180.66 L442.13,179.94 L445.07,179.27 L448.03,178.65 L450.99,178.06 L453.96,177.52 L456.94,177.03 L459.92,176.58 L462.92,176.17 L465.91,175.81 L468.92,175.49 L471.92,175.21 L474.93,174.98 L477.95,174.80 L480.96,174.66 L483.98,174.56 L487.00,174.51 Z" fill="url(#spk)" stroke="#111" stroke-width="1.3"/><path d="M487.00,178.51 L483.98,178.56 L480.97,178.66 L477.96,178.80 L474.95,178.99 L471.94,179.23 L468.94,179.51 L465.94,179.83 L462.95,180.20 L459.96,180.61 L456.98,181.07 L454.01,181.58 L451.04,182.13 L448.09,182.72 L445.14,183.36 L442.20,184.04 L439.28,184.76 L436.36,185.53 L433.46,186.35 L430.57,187.20 L427.69,188.10 L424.82,189.05 L421.97,190.04 L419.14,191.06 L416.32,192.14 L413.52,193.25 L410.73,194.41 L407.97,195.60 L405.22,196.84 L402.49,198.12 L399.78,199.45 L397.09,200.81 L394.42,202.21 L391.77,203.65 L389.14,205.14 L386.54,206.66 L383.96,208.22 L381.40,209.82 L378.87,211.45 L376.36,213.13 L373.88,214.84 L371.43,216.59 L369.00,218.38 L366.59,220.20 L364.22,222.06 L361.87,223.95 L359.56,225.88 L357.27,227.85 L355.01,229.85 L352.78,231.88 L350.58,233.94 L348.42,236.04 L346.28,238.17 L344.18,240.33 L342.11,242.53 L340.08,244.75 L338.07,247.01 L336.11,249.29 L334.17,251.61 L332.28,253.95 L330.41,256.32 L328.59,258.72 L326.79,261.15 L325.04,263.60 L323.32,266.08 L321.64,268.58 L320.00,271.11 L318.40,273.67 L316.83,276.24 L315.31,278.84 L313.82,281.47 L312.37,284.11 L310.97,286.78 L309.60,289.47 L308.27,292.18 L306.99,294.90 L305.74,297.65 L304.54,300.42 L303.38,303.20 L302.26,306.00" fill="none" stroke="#222" stroke-width="1.1" /><path d="M516.00,168.73 L512.79,168.34 L509.58,168.00 L506.36,167.71 L503.14,167.47 L499.92,167.28 L496.69,167.14 L493.46,167.05 L490.23,167.00 L487.00,167.01" fill="none" stroke="#333" stroke-width="1.0" /><path d="M519.00,176.71 L515.82,176.27 L512.63,175.87 L509.44,175.52 L506.24,175.23 L503.04,174.98 L499.84,174.79 L496.63,174.64 L493.42,174.55 L490.21,174.50 L487.00,174.51" fill="none" stroke="#333" stroke-width="1.0" /><path d="M286.09,303.50 L285.06,306.32 L284.08,309.16 L283.13,312.00 L282.22,314.87 L281.35,317.74 L280.52,320.62 L279.73,323.52 L278.98,326.43 L278.27,329.34 L277.60,332.27 L276.98,335.21 L276.39,338.15 L275.84,341.10 L275.34,344.06 L274.87,347.03 L274.45,350.00 L274.07,352.98 L273.73,355.96 L273.43,358.95 L273.17,361.94 L272.96,364.93 L272.78,367.93 L272.65,370.93 L272.56,373.93 L272.51,376.93 L272.50,379.93 L272.54,382.94 L272.61,385.94 L272.73,388.94 L272.89,391.94 L273.09,394.93 L273.33,397.92 L273.61,400.91 L273.94,403.90 L274.30,406.88 L274.71,409.85 L275.16,412.82 L275.65,415.78 L276.18,418.74 L276.75,421.68 L277.36,424.62 L278.01,427.55 L278.71,430.47 L279.44,433.38 L280.22,436.29 L281.03,439.17 L281.88,442.05 L282.78,444.92 L283.71,447.77 L284.69,450.61 L285.70,453.44 L286.75,456.25 L287.84,459.05 L288.97,461.83 L290.14,464.59 L291.34,467.34 L292.59,470.08 L293.87,472.79 L295.19,475.49 L296.55,478.16 L297.94,480.82 L299.37,483.46 L300.84,486.08 L302.34,488.68 L303.88,491.26 L305.45,493.82 L307.06,496.35 L308.71,498.86 L310.39,501.35 L312.10,503.81 L313.85,506.26" fill="none" stroke="#222" stroke-width="1.1" /><path d="M289.80,305.00 L288.77,307.85 L287.77,310.71 L286.82,313.59 L285.91,316.48 L285.04,319.38 L284.21,322.29 L283.42,325.22 L282.67,328.16 L281.97,331.11 L281.31,334.06 L280.69,337.03 L280.11,340.00 L279.57,342.99 L279.08,345.98 L278.63,348.97 L278.23,351.98 L277.86,354.99 L277.54,358.00 L277.26,361.02 L277.03,364.04 L276.84,367.06 L276.69,370.09 L276.58,373.12 L276.52,376.15 L276.50,379.18 L276.52,382.21 L276.59,385.24 L276.70,388.27 L276.86,391.29 L277.05,394.32 L277.29,397.34 L277.58,400.35 L277.90,403.37 L278.27,406.38 L278.68,409.38 L279.14,412.37 L279.63,415.36 L280.17,418.35 L280.76,421.32 L281.38,424.28 L282.05,427.24 L282.76,430.19 L283.51,433.12 L284.30,436.05 L285.14,438.96 L286.01,441.86 L286.93,444.75 L287.89,447.63 L288.89,450.49 L289.93,453.33 L291.01,456.16 L292.13,458.98 L293.29,461.78 L294.49,464.56 L295.73,467.33 L297.01,470.07 L298.32,472.80 L299.68,475.51 L301.08,478.20 L302.51,480.87 L303.98,483.52 L305.49,486.15 L307.04,488.76 L308.62,491.34 L310.24,493.90 L311.90,496.44 L313.59,498.95 L315.32,501.44 L317.08,503.90 L324.77,498.32 L323.02,495.87 L321.31,493.40 L319.63,490.90 L317.99,488.38 L316.39,485.84 L314.82,483.27 L313.30,480.67 L311.81,478.06 L310.36,475.42 L308.95,472.77 L307.58,470.09 L306.25,467.39 L304.96,464.67 L303.71,461.94 L302.51,459.18 L301.34,456.41 L300.21,453.62 L299.13,450.81 L298.08,447.99 L297.08,445.16 L296.12,442.31 L295.21,439.44 L294.33,436.56 L293.50,433.67 L292.71,430.77 L291.97,427.86 L291.26,424.93 L290.61,422.00 L289.99,419.05 L289.42,416.10 L288.89,413.14 L288.41,410.17 L287.97,407.19 L287.57,404.21 L287.22,401.22 L286.91,398.23 L286.65,395.23 L286.43,392.23 L286.26,389.23 L286.13,386.23 L286.04,383.22 L286.00,380.21 L286.01,377.20 L286.06,374.20 L286.15,371.19 L286.29,368.18 L286.47,365.18 L286.70,362.18 L286.97,359.19 L287.28,356.20 L287.65,353.21 L288.05,350.23 L288.50,347.25 L288.99,344.29 L289.53,341.33 L290.11,338.37 L290.73,335.43 L291.40,332.50 L292.11,329.58 L292.86,326.66 L293.66,323.76 L294.50,320.88 L295.38,318.00 Z" fill="url(#spk)" stroke="#111" stroke-width="1.2"/><path d="M287,303.5 L291.5,305" stroke="#222" stroke-width="1"/><path d="M486.81,195.71 L483.81,195.76 L480.80,195.86 L477.80,196.01 L474.80,196.21 L471.81,196.46 L468.82,196.76 L465.83,197.10 L462.86,197.50 L459.88,197.95 L456.92,198.44 L453.96,198.99 L451.02,199.58 L448.08,200.22 L445.16,200.91 L442.24,201.65 L439.34,202.44 L436.46,203.27 L433.58,204.15 L430.73,205.08 L427.88,206.06 L425.06,207.08 L422.25,208.15 L419.46,209.26 L416.69,210.42 L413.94,211.63 L411.20,212.88 L408.49,214.18 L405.80,215.52 L403.14,216.91 L400.49,218.34 L397.88,219.81 L395.28,221.33 L392.71,222.88 L390.17,224.49 L387.65,226.13 L385.16,227.81 L382.70,229.54 L380.27,231.30 L377.87,233.11 L375.50,234.95 L373.15,236.84 L370.84,238.76 L368.57,240.72 L366.32,242.72 L364.11,244.75 L361.93,246.82 L359.79,248.93 L357.68,251.07 L355.61,253.24 L353.57,255.45 L351.57,257.69 L349.61,259.97 L347.68,262.28 L345.79,264.62 L343.95,266.99 L342.14,269.39 L340.37,271.82 L338.64,274.28 L336.96,276.76 L335.31,279.28 L333.71,281.82 L332.14,284.38 L330.62,286.98 L329.15,289.59 L327.71,292.24 L326.33,294.90 L324.98,297.59 L323.68,300.30 L322.42,303.03 L321.21,305.78 L320.05,308.55 L318.93,311.34 L317.86,314.14 L316.83,316.97 L315.85,319.81 L314.92,322.67 L314.03,325.54 L313.20,328.42 L312.41,331.32 L311.67,334.24 L310.97,337.16 L310.33,340.09 L309.73,343.04 L309.18,345.99 L308.68,348.96 L308.23,351.93 L307.83,354.91 L307.48,357.89 L307.18,360.88 L306.93,363.88 L306.72,366.87 L306.57,369.88 L306.46,372.88 L306.41,375.88 L306.40,378.89 L306.45,381.89 L306.54,384.90 L306.69,387.90 L306.88,390.90 L307.12,393.89 L307.41,396.88 L307.76,399.87 L308.15,402.85 L308.59,405.82 L309.07,408.79 L309.61,411.74 L310.20,414.69 L310.83,417.63 L311.52,420.55 L312.25,423.47 L313.03,426.37 L313.86,429.26 L314.73,432.13 L315.65,434.99 L316.62,437.84 L317.64,440.67 L318.70,443.48 L319.81,446.27 L320.97,449.04 L322.17,451.80 L323.41,454.53 L324.70,457.25 L326.04,459.94 L327.42,462.61 L328.84,465.25 L330.31,467.88 L331.82,470.48 L333.37,473.05 L334.97,475.59 L336.61,478.11 L338.29,480.61 L340.01,483.07 L341.77,485.51 L343.57,487.91 L345.41,490.29 L347.28,492.64 L349.20,494.95 L351.16,497.23 L353.15,499.48" fill="none" stroke="#1a1a1a" stroke-width="1.3" /><path d="M377,175 V491" stroke="#555" stroke-width="1.5"/><path d="M375.5,175 H487" stroke="#333" stroke-width="1"/><path d="M487.2,166 V197" stroke="#222" stroke-width="1.4"/><path d="M487.2,197 V491" stroke="#222" stroke-width="1.4" stroke-dasharray="6 3.5"/><path d="M298,306 H487" stroke="#111" stroke-width="1.5"/><path d="M294,317.5 H487" stroke="#222" stroke-width="1.2"/><path d="M285,381.2 H487" stroke="#333" stroke-width="0.9"/><path d="M284,420.5 H487" stroke="#111" stroke-width="1.5"/><path d="M290,431 H487" stroke="#222" stroke-width="1.2"/><circle cx="376.8" cy="306" r="1.6" fill="#111"/><circle cx="376.8" cy="317.5" r="1.6" fill="#111"/><circle cx="376.8" cy="420" r="1.6" fill="#111"/><circle cx="376.8" cy="431" r="1.6" fill="#111"/><circle cx="487" cy="306" r="1.6" fill="#111"/><circle cx="487" cy="317.5" r="1.6" fill="#111"/><circle cx="487" cy="420" r="1.6" fill="#111"/><circle cx="487" cy="431" r="1.6" fill="#111"/><circle cx="487" cy="381.2" r="1.6" fill="#111"/><path d="M297.5,305 H303 V318 H299 Z" fill="#1a1a1a" opacity="0.9"/><path d="M287.5,419.5 H296.5 V432 H290 Z" fill="#1e1e1e" opacity="0.85"/><path d="M300,307 L318,314.4" stroke="#111" stroke-width="1.2"/><circle cx="318" cy="314.4" r="1.4" fill="#111"/><path d="M282.3,416 L310.3,410.2" stroke="#111" stroke-width="1.2"/><circle cx="310.3" cy="410.2" r="1.4" fill="#111"/><rect x="424.7" y="248.8" width="30.900000000000034" height="7.699999999999989" rx="1.5" fill="#fff" stroke="#c8c8c8" stroke-width="0.8"/><text x="440.15" y="254.63" font-size="5.5" text-anchor="middle" fill="#333" font-family="Liberation Sans" textLength="25.900000000000034" lengthAdjust="spacingAndGlyphs">BEDROOMS</text><rect x="424.7" y="348" width="36.0" height="9.399999999999977" rx="1.5" fill="#fff" stroke="#c8c8c8" stroke-width="0.8"/><text x="442.7" y="354.788" font-size="5.8" text-anchor="middle" fill="#333" font-family="Liberation Sans" textLength="31.0" lengthAdjust="spacingAndGlyphs">LIVING ROOM</text><rect x="424" y="454" width="30.30000000000001" height="7.5" rx="1.5" fill="#fff" stroke="#c8c8c8" stroke-width="0.8"/><text x="439.15" y="459.73" font-size="5.5" text-anchor="middle" fill="#333" font-family="Liberation Sans" textLength="25.30000000000001" lengthAdjust="spacingAndGlyphs">BASEMENT</text><rect x="418.8" y="289" width="47.19999999999999" height="12.199999999999989" rx="1.5" fill="#fff" stroke="#c8c8c8" stroke-width="0.8"/><text x="421.3" y="292.50" font-size="3.4" font-family="Liberation Sans" fill="#444" textLength="26.2" lengthAdjust="spacingAndGlyphs">SIP OR EST PLYWOOD</text><text x="421.3" y="296.00" font-size="3.4" font-family="Liberation Sans" fill="#444" textLength="40.1" lengthAdjust="spacingAndGlyphs">WRESTWRAP EDGE & TOP MANUF</text><text x="421.3" y="299.50" font-size="3.4" font-family="Liberation Sans" fill="#444" textLength="40.1" lengthAdjust="spacingAndGlyphs">JOISTS @ 16" O/C MAX</text><path d="M421,291 H416.5 L413,306" fill="none" stroke="#222" stroke-width="1"/><rect x="420" y="402.8" width="46.5" height="12.800000000000011" rx="1.5" fill="#fff" stroke="#c8c8c8" stroke-width="0.8"/><text x="422.5" y="406.30" font-size="3.4" font-family="Liberation Sans" fill="#444" textLength="25.7" lengthAdjust="spacingAndGlyphs">SIP OR EST PLYWOOD</text><text x="422.5" y="410.10" font-size="3.4" font-family="Liberation Sans" fill="#444" textLength="39.4" lengthAdjust="spacingAndGlyphs">WRESTWRAP EDGE & TOP MANUF</text><text x="422.5" y="413.90" font-size="3.4" font-family="Liberation Sans" fill="#444" textLength="39.4" lengthAdjust="spacingAndGlyphs">JOISTS @ 16" O/C MAX</text><path d="M421,405 H417.5 L413,419" fill="none" stroke="#222" stroke-width="1"/><rect x="417" y="483" width="43.39999999999998" height="12" rx="1.5" fill="#fff" stroke="#c8c8c8" stroke-width="0.8"/><text x="419.5" y="486.50" font-size="3.4" font-family="Liberation Sans" fill="#444" textLength="23.8" lengthAdjust="spacingAndGlyphs">SIP OR EST PLYWOOD</text><text x="419.5" y="489.90" font-size="3.4" font-family="Liberation Sans" fill="#444" textLength="36.5" lengthAdjust="spacingAndGlyphs">WRESTWRAP EDGE & TOP MANUF</text><text x="419.5" y="493.30" font-size="3.4" font-family="Liberation Sans" fill="#444" textLength="36.5" lengthAdjust="spacingAndGlyphs">JOISTS @ 16" O/C MAX</text><path d="M418,485 H414 L410,491" fill="none" stroke="#222" stroke-width="1"/><rect x="234" y="277.6" width="41.30000000000001" height="16.799999999999955" rx="1.5" fill="#fff" stroke="#c8c8c8" stroke-width="0.8"/><text x="236.5" y="281.10" font-size="3.4" font-family="Liberation Sans" fill="#444" textLength="34.5" lengthAdjust="spacingAndGlyphs">1 DUTCH TOP SOL CURVED</text><text x="236.5" y="284.97" font-size="3.4" font-family="Liberation Sans" fill="#444" textLength="34.5" lengthAdjust="spacingAndGlyphs">LEDGER J/4 ANCHOR</text><text x="236.5" y="288.83" font-size="3.4" font-family="Liberation Sans" fill="#444" textLength="34.5" lengthAdjust="spacingAndGlyphs">BOLTS EAST INF SOME</text><text x="236.5" y="292.70" font-size="3.4" font-family="Liberation Sans" fill="#444" textLength="18.2" lengthAdjust="spacingAndGlyphs">GORBEL</text><path d="M275.3,280.5 H284 L294,300" fill="none" stroke="#222" stroke-width="1"/><rect x="234" y="295.5" width="20.5" height="5.300000000000011" rx="1.5" fill="#fff" stroke="#c8c8c8" stroke-width="0.8"/><text x="244.25" y="299.44599999999997" font-size="3.6" text-anchor="middle" fill="#333" font-family="Liberation Sans" textLength="15.5" lengthAdjust="spacingAndGlyphs">POUR JOINT</text><path d="M254.5,297.5 H271.5 V306 M268.5,306.5 H282.4" fill="none" stroke="#222" stroke-width="1"/><rect x="227.1" y="356.2" width="22.700000000000017" height="5.900000000000034" rx="1.5" fill="#fff" stroke="#c8c8c8" stroke-width="0.8"/><text x="238.45" y="360.518" font-size="3.8" text-anchor="middle" fill="#333" font-family="Liberation Sans" textLength="17.700000000000017" lengthAdjust="spacingAndGlyphs">FORM SET AI</text><path d="M249.8,359 Q265,359.5 273.4,363.6" fill="none" stroke="#222" stroke-width="1"/><rect x="227.1" y="409.9" width="21.80000000000001" height="5.600000000000023" rx="1.5" fill="#fff" stroke="#c8c8c8" stroke-width="0.8"/><text x="238.0" y="414.068" font-size="3.8" text-anchor="middle" fill="#333" font-family="Liberation Sans" textLength="16.80000000000001" lengthAdjust="spacingAndGlyphs">POUR JOINT</text><path d="M248.9,412.5 H265.5 V420.5 M262,420.5 H284" fill="none" stroke="#222" stroke-width="1"/><rect x="227.1" y="442.7" width="43.400000000000006" height="15.300000000000011" rx="1.5" fill="#fff" stroke="#c8c8c8" stroke-width="0.8"/><text x="229.6" y="446.20" font-size="3.4" font-family="Liberation Sans" fill="#444" textLength="36.5" lengthAdjust="spacingAndGlyphs">1 DUTCH TOP SOL CURVED</text><text x="229.6" y="449.57" font-size="3.4" font-family="Liberation Sans" fill="#444" textLength="36.5" lengthAdjust="spacingAndGlyphs">LEDGER J/4 ANCHOR</text><text x="229.6" y="452.93" font-size="3.4" font-family="Liberation Sans" fill="#444" textLength="36.5" lengthAdjust="spacingAndGlyphs">BOLTS EAST INF SOME</text><text x="229.6" y="456.30" font-size="3.4" font-family="Liberation Sans" fill="#444" textLength="19.2" lengthAdjust="spacingAndGlyphs">GORBEL</text><path d="M270.5,445 L289.6,433.8" fill="none" stroke="#222" stroke-width="1"/><rect x="342.7" y="277.8" width="23.100000000000023" height="5.800000000000011" rx="1.5" fill="#fff" stroke="#c8c8c8" stroke-width="0.8"/><text x="354.25" y="282.06800000000004" font-size="3.8" text-anchor="middle" fill="#333" font-family="Liberation Sans" textLength="18.100000000000023" lengthAdjust="spacingAndGlyphs">FORM SET AI</text><path d="M342.7,280.7 L323.8,268.5" fill="none" stroke="#222" stroke-width="1"/><rect x="378.7" y="374.9" width="24.69999999999999" height="5.300000000000011" rx="1.5" fill="#fff" stroke="#c8c8c8" stroke-width="0.8"/><text x="391.04999999999995" y="378.77399999999994" font-size="3.4" text-anchor="middle" fill="#333" font-family="Liberation Sans" textLength="19.69999999999999" lengthAdjust="spacingAndGlyphs">W/ 4" FINISHED</text><rect x="285" y="371.9" width="7.600000000000023" height="5.0" rx="1.5" fill="#fff" stroke="#c8c8c8" stroke-width="0.8"/><text x="288.8" y="375.62399999999997" font-size="3.4" text-anchor="middle" fill="#333" font-family="Liberation Sans" textLength="2.6000000000000227" lengthAdjust="spacingAndGlyphs">8"</text><rect x="370.3" y="230" width="5.199999999999989" height="25" rx="1.2" fill="#fff" stroke="#c4c4c4" stroke-width="0.7"/><rect x="370.3" y="289.4" width="5.0" height="9.300000000000011" rx="1.2" fill="#fff" stroke="#c4c4c4" stroke-width="0.7"/><rect x="370.3" y="308" width="5.0" height="9.300000000000011" rx="1.2" fill="#fff" stroke="#c4c4c4" stroke-width="0.7"/><path d="M368.7,318 V491 M375.3,318 V491" stroke="#d4d4d4" stroke-width="0.8"/><path d="M372.8,298.7 Q373,303 376.5,306" fill="none" stroke="#333" stroke-width="0.8"/><path d="M372.8,412 Q373,417 376.5,420" fill="none" stroke="#333" stroke-width="0.8"/><text transform="translate(373.6 365) rotate(-90)" font-size="3.2" text-anchor="middle" fill="#666" font-family="Liberation Sans">8' 10 1/2"</text><text transform="translate(373.6 480) rotate(-90)" font-size="3.2" text-anchor="middle" fill="#666" font-family="Liberation Sans">8' 10 1/2"</text><text transform="translate(373.6 246) rotate(-90)" font-size="3.2" text-anchor="middle" fill="#666" font-family="Liberation Sans">1' 1 1/2"</text><g transform="rotate(-30 388 222)"><rect x="379" y="219.5" width="18" height="5" rx="1.2" fill="#fff" stroke="#cfcfcf" stroke-width="0.7"/></g><g transform="rotate(-62 332 484)"><rect x="320" y="481" width="24" height="6" rx="1.2" fill="#fff" stroke="#cfcfcf" stroke-width="0.7"/></g><rect x="303" y="349" width="5" height="16" rx="1.2" fill="#fff" stroke="#cfcfcf" stroke-width="0.7"/></g></svg><div class="a" style="left:737px;top:133px;width:11px;height:359px;background:linear-gradient(90deg,#dcdcdc,#d0d0d0);border-left:1px solid #7a7a7a"></div><div class="a" style="left:738px;top:134px;width:10px;height:9px;background:#fbfbfb;border:1px solid #d0d0d0"></div><svg class="a" style="left:740px;top:136px;" width="7" height="5" viewBox="0 0 7 5"><path d="M0.5 4L3.5 1L6.5 4" stroke="#333" stroke-width="1.3" fill="none"/></svg><div class="a" style="left:738px;top:144px;width:10px;height:19px;background:linear-gradient(90deg,#f2f2f2,#fafafa);border:1px solid #d0d0d0"></div><div class="a" style="left:740px;top:151px;width:5px;height:4px;background:#c8c8c8"></div><div class="a" style="left:738px;top:482px;width:10px;height:9px;background:#fbfbfb;border:1px solid #d0d0d0"></div><svg class="a" style="left:740px;top:484px;" width="7" height="5" viewBox="0 0 7 5"><path d="M0.5 1L3.5 4L6.5 1" stroke="#333" stroke-width="1.3" fill="none"/></svg><div class="a" style="left:748px;top:131px;width:1px;height:385px;background:#fbfbfb"></div><div class="a" style="left:749px;top:114px;width:1px;height:402px;background:#a9a9a9"></div><div class="a" style="left:0;top:492px;width:750px;height:24px;background:#f3f3f3;border-top:1px solid #fdfdfd"></div><div class="a" style="left:0;top:513px;width:750px;height:1px;background:#e4e4e4"></div><div class="a" style="left:0;top:514px;width:750px;height:1px;background:#fdfdfd"></div><div class="a" style="left:0;top:515px;width:750px;height:1px;background:#a3a3a3"></div><div class="a" style="left:0;top:492px;width:1px;height:24px;background:#a9a9a9"></div><div class="a" style="left:3px;top:494px;width:5px;height:11px;background-image:radial-gradient(#e2e2e2 0.6px,transparent 0.9px);background-size:2px 2px"></div><svg class="a" style="left:3px;top:507px;" width="5" height="5" viewBox="0 0 5 5"><path d="M0.7 0V5" stroke="#707070" stroke-width="1.2"/><path d="M4.8 0.2L1.6 2.5L4.8 4.8Z" fill="#707070"/></svg><svg class="a" style="left:10px;top:494px;" width="18" height="17" viewBox="0 0 18 17"><circle cx="6" cy="6" r="3.6" fill="none" stroke="#8b7f70" stroke-width="2.4" stroke-dasharray="1.6 1.2"/><circle cx="6" cy="6" r="2.8" fill="none" stroke="#8b7f70" stroke-width="1.3"/><circle cx="12" cy="11.5" r="3.6" fill="none" stroke="#f5a623" stroke-width="2.4" stroke-dasharray="1.6 1.2"/><circle cx="12" cy="11.5" r="2.8" fill="none" stroke="#f5a623" stroke-width="1.5"/></svg><div class="t" style="left:29.70px;top:497.50px;font-size:9.3px;line-height:11.16px;color:#1e1e1e;transform:scaleX(0.8869);">Options...</div><svg class="a" style="left:69.5px;top:501.0px;" width="5" height="3" viewBox="0 0 5 3"><path d="M0 0H5L2.5 3Z" fill="#3c3c3c"/></svg><div class="a" style="left:79px;top:494px;width:1px;height:18px;background:#dadada"></div><svg class="a" style="left:82px;top:496px;" width="12" height="15" viewBox="0 0 12 15"><path d="M2.5 4H10V11.5H2.5Z" fill="none" stroke="#6b6258" stroke-width="1.1"/><path d="M8 1.8L10.2 4L8 6.2M0.3 9.5L2.5 11.7L4.7 9.5M2.5 11.5V14.5" fill="none" stroke="#6b6258" stroke-width="1"/></svg><div class="t" style="left:94.10px;top:494.64px;font-size:8.3px;line-height:9.96px;color:#1e1e1e;transform:scaleX(1.0321);-webkit-text-stroke:0.1px #1e1e1e">W: 123.1mm</div><div class="t" style="left:94.10px;top:503.34px;font-size:8.3px;line-height:9.96px;color:#1e1e1e;transform:scaleX(1.0707);-webkit-text-stroke:0.1px #1e1e1e">H: 183.1mm</div><div class="a" style="left:145px;top:495px;width:1px;height:16px;background:#dadada"></div><svg class="a" style="left:148px;top:496px;" width="11" height="13" viewBox="0 0 11 13"><path d="M5 1V11M0 6H10" stroke="#888" stroke-width="1.1"/><path d="M6 7V12.5L7.5 11L9 13L10 12.5L9 10.5H11Z" fill="#666"/></svg><div class="t" style="left:160.80px;top:494.64px;font-size:8.3px;line-height:9.96px;color:#1e1e1e;transform:scaleX(0.8671);-webkit-text-stroke:0.1px #1e1e1e">X :</div><div class="t" style="left:160.80px;top:503.34px;font-size:8.3px;line-height:9.96px;color:#1e1e1e;transform:scaleX(0.8801);-webkit-text-stroke:0.1px #1e1e1e">Y :</div><div class="a" style="left:212px;top:494px;width:5px;height:11px;background-image:radial-gradient(#e2e2e2 0.6px,transparent 0.9px);background-size:2px 2px"></div><svg class="a" style="left:212px;top:507px;" width="5" height="5" viewBox="0 0 5 5"><path d="M0.7 0V5" stroke="#707070" stroke-width="1.2"/><path d="M4.8 0.2L1.6 2.5L4.8 4.8Z" fill="#707070"/></svg><svg class="a" style="left:219.5px;top:495px;" width="16" height="16" viewBox="0 0 16 16"><circle cx="8.0" cy="8.0" r="7.4" fill="#fafafa" stroke="#cfc7bd" stroke-width="1.1"/><path d="M5 4.5V11.5M11 4.5L7.5 8L11 11.5" fill="none" stroke="#8cc0ea" stroke-width="1.4"/></svg><svg class="a" style="left:239px;top:495px;" width="16" height="16" viewBox="0 0 16 16"><circle cx="8.0" cy="8.0" r="7.4" fill="#fafafa" stroke="#d8d1c8" stroke-width="1.1"/><path d="M9.5 4.5L6 8L9.5 11.5" fill="none" stroke="#a9d0f0" stroke-width="1.4"/></svg><div class="a" style="left:258px;top:495px;width:63px;height:16px;background:#fff;border:1px solid #b7b0a6;border-radius:2px"></div><div class="t" style="left:303.00px;top:497.51px;font-size:9.5px;line-height:11.40px;color:#333;transform:scaleX(0.9463);">1</div><svg class="a" style="left:309px;top:497px;" width="10" height="11" viewBox="0 0 10 11"><path d="M1 10L5 1" stroke="#888" stroke-width="0.9"/><text x="5.5" y="5" font-size="5.5" font-family="Liberation Sans" fill="#777">8</text></svg><svg class="a" style="left:323px;top:495px;" width="16" height="16" viewBox="0 0 16 16"><circle cx="8.0" cy="8.0" r="7.4" fill="#fafafa" stroke="#a89d90" stroke-width="1.1"/><path d="M6.5 4.5L10 8L6.5 11.5" fill="none" stroke="#3a8ed6" stroke-width="1.6"/></svg><svg class="a" style="left:343px;top:495px;" width="16" height="16" viewBox="0 0 16 16"><circle cx="8.0" cy="8.0" r="7.4" fill="#fafafa" stroke="#a89d90" stroke-width="1.1"/><path d="M11 4.5V11.5M5 4.5L8.5 8L5 11.5" fill="none" stroke="#3a8ed6" stroke-width="1.6"/></svg><div class="a" style="left:363px;top:494px;width:1px;height:18px;background:#dadada"></div><svg class="a" style="left:368px;top:495px;" width="16" height="16" viewBox="0 0 16 16"><circle cx="8.0" cy="8.0" r="7.4" fill="#fafafa" stroke="#a89d90" stroke-width="1.1"/><path d="M4 8H12M7.5 4.5L4 8L7.5 11.5" fill="none" stroke="#6aac2e" stroke-width="1.6"/></svg><svg class="a" style="left:387.5px;top:495px;" width="16" height="16" viewBox="0 0 16 16"><circle cx="8.0" cy="8.0" r="7.4" fill="#fafafa" stroke="#d0c8bf" stroke-width="1.1"/><path d="M4 8H12M8.5 4.5L12 8L8.5 11.5" fill="none" stroke="#a8d08e" stroke-width="1.6"/></svg><div class="a" style="left:407px;top:494px;width:5px;height:11px;background-image:radial-gradient(#e2e2e2 0.6px,transparent 0.9px);background-size:2px 2px"></div><svg class="a" style="left:407px;top:507px;" width="5" height="5" viewBox="0 0 5 5"><path d="M0.7 0V5" stroke="#707070" stroke-width="1.2"/><path d="M4.8 0.2L1.6 2.5L4.8 4.8Z" fill="#707070"/></svg><svg class="a" style="left:416px;top:495px;" width="14" height="16" viewBox="0 0 14 16"><path d="M1,2.5 Q1,1 2.5,1 H8.5 L12,4.5 V13.5 Q12,15 10.5,15 H2.5 Q1,15 1,13.5 Z" fill="#fdfcf9" stroke="#8a8175" stroke-width="1.1" stroke-linejoin="round"/><path d="M8.5,1 L12,4.5 H9.3 Q8.5,4.5 8.5,3.7 Z" fill="#8a8175" stroke="#8a8175" stroke-width="1" stroke-linejoin="round"/></svg><div class="a" style="left:433px;top:494px;width:19px;height:19px;border:1px solid #c9a24f;border-radius:2px;background:linear-gradient(#fdf0c2,#fbe39a)"></div><svg class="a" style="left:435px;top:495px;" width="16" height="17" viewBox="0 0 16 17"><path d="M2.5,0.5 V5.5 H13.5 V0.5" fill="#fff" stroke="#6b6258" stroke-width="1.2"/><path d="M2.5,16.5 V9 H10 L13.5,12.5 V16.5" fill="#fff" stroke="#6b6258" stroke-width="1.2"/><path d="M10,9 L13.5,12.5 H10Z" fill="#6b6258"/></svg><svg class="a" style="left:453px;top:496px;" width="19" height="14" viewBox="0 0 19 14"><path d="M0.7,2.5 Q0.7,1 2.2,1 H5.699999999999999 L8.2,3.5 V11.5 Q8.2,13 6.699999999999999,13 H2.2 Q0.7,13 0.7,11.5 Z" fill="#fdfcf9" stroke="#a39a8e" stroke-width="1" stroke-linejoin="round"/><path d="M5.699999999999999,1 L8.2,3.5 H6.499999999999999 Q5.699999999999999,3.5 5.699999999999999,2.7 Z" fill="#a39a8e" stroke="#a39a8e" stroke-width="1" stroke-linejoin="round"/><path d="M10.3,2.5 Q10.3,1 11.8,1 H15.3 L17.8,3.5 V11.5 Q17.8,13 16.3,13 H11.8 Q10.3,13 10.3,11.5 Z" fill="#fdfcf9" stroke="#a39a8e" stroke-width="1" stroke-linejoin="round"/><path d="M15.3,1 L17.8,3.5 H16.1 Q15.3,3.5 15.3,2.7 Z" fill="#a39a8e" stroke="#a39a8e" stroke-width="1" stroke-linejoin="round"/></svg><svg class="a" style="left:473px;top:495px;" width="18" height="17" viewBox="0 0 18 17"><path d="M1,0.5 V5.5 H8 V0.5 M10,0.5 V5.5 H17 V0.5" fill="#fff" stroke="#a39a8e" stroke-width="1"/><path d="M1,16.5 V9.5 H5.5 L8,12 V16.5 M10,16.5 V9.5 H14.5 L17,12 V16.5" fill="#fff" stroke="#a39a8e" stroke-width="1"/><path d="M5.5,9.5 L8,12 H5.5Z M14.5,9.5 L17,12 H14.5Z" fill="#6b6258"/></svg><div class="a" style="left:521px;top:494px;width:5px;height:11px;background-image:radial-gradient(#e2e2e2 0.6px,transparent 0.9px);background-size:2px 2px"></div><svg class="a" style="left:521px;top:507px;" width="5" height="5" viewBox="0 0 5 5"><path d="M0.7 0V5" stroke="#707070" stroke-width="1.2"/><path d="M4.8 0.2L1.6 2.5L4.8 4.8Z" fill="#707070"/></svg><div class="a" style="left:528px;top:495px;width:58px;height:16px;background:#fff;border:1px solid #b7b0a6;border-radius:2px"></div><div class="t" style="left:531.60px;top:498.01px;font-size:9.5px;line-height:11.40px;color:#1e1e1e;transform:scaleX(0.7861);">100%</div><svg class="a" style="left:576.8px;top:501.5px;" width="5" height="3" viewBox="0 0 5 3"><path d="M0 0H5L2.5 3Z" fill="#3c3c3c"/></svg><div class="a" style="left:589.5px;top:494px;width:1px;height:18px;background:#dadada"></div><svg class="a" style="left:592.5px;top:495px;" width="16" height="16" viewBox="0 0 16 16"><circle cx="8.0" cy="8.0" r="7.4" fill="#f8ecd6" stroke="#a0907c" stroke-width="1.1"/><path d="M4 8H12" stroke="#3a8ed6" stroke-width="1.6"/></svg><div class="a" style="left:612px;top:503px;width:71px;height:1px;background:#a8a8a8"></div><div class="a" style="left:644.5px;top:495px;width:5px;height:17px;background:#fafafa;border:1px solid #8f8f8f;border-radius:2px"></div><svg class="a" style="left:686px;top:495px;" width="16" height="16" viewBox="0 0 16 16"><circle cx="8.0" cy="8.0" r="7.4" fill="#f8ecd6" stroke="#a0907c" stroke-width="1.1"/><path d="M4 8H12M8 4V12" stroke="#3a8ed6" stroke-width="1.6"/></svg><div class="a" style="left:705px;top:494px;width:5px;height:11px;background-image:radial-gradient(#e2e2e2 0.6px,transparent 0.9px);background-size:2px 2px"></div><svg class="a" style="left:705px;top:507px;" width="5" height="5" viewBox="0 0 5 5"><path d="M0.7 0V5" stroke="#707070" stroke-width="1.2"/><path d="M4.8 0.2L1.6 2.5L4.8 4.8Z" fill="#707070"/></svg><svg class="a" style="left:712px;top:498px;" width="13" height="11" viewBox="0 0 13 11"><rect x="0.6" y="0.6" width="11.8" height="9.8" rx="1" fill="#fdfbf3" stroke="#8fb7de" stroke-width="1.2"/><rect x="0.6" y="0.6" width="11.8" height="2" fill="#8fb7de"/></svg><svg class="a" style="left:733.1px;top:501.5px;" width="5" height="3" viewBox="0 0 5 3"><path d="M0 0H5L2.5 3Z" fill="#666"/></svg><svg class="a" style="left:740px;top:492px;" width="8" height="7" viewBox="0 0 8 7"><path d="M1 0.5H7M1 6.5H7M1.5 2.5L4 5L6.5 2.5" fill="none" stroke="#555" stroke-width="1"/></svg><div class="a" style="left:350px;top:103px;width:184px;height:65px;background:#f7f7f7;border:1px solid #a9a9a9;box-shadow:1px 1px 2px rgba(0,0,0,0.25)"></div><div class="a" style="left:354px;top:106px;width:177px;height:20px;border:1px solid #e3c777;border-radius:2px;background:linear-gradient(#fdf3cf,#fbe7a4)"></div><svg class="a" style="left:365px;top:108px;" width="15" height="16" viewBox="0 0 15 16"><path d="M1,14V2Q1,1 2,1H10" fill="none" stroke="#a89f90" stroke-width="1.1"/><rect x="1" y="1" width="3" height="13" fill="#ddd3bd" opacity="0.6"/><path d="M3.7,5.1 Q3.7,3.6 5.2,3.6 H10.8 L14.3,7.1 V13.9 Q14.3,15.4 12.8,15.4 H5.2 Q3.7,15.4 3.7,13.9 Z" fill="#fdfcf9" stroke="#6b6258" stroke-width="1.2" stroke-linejoin="round"/><path d="M10.8,3.6 L14.3,7.1 H11.600000000000001 Q10.8,7.1 10.8,6.3 Z" fill="#6b6258" stroke="#6b6258" stroke-width="1" stroke-linejoin="round"/><path d="M5.5,8.625H12.3M6.775,6.5V12.45H13.149999999999999M11.45,8.625V14.149999999999999M6.775,12.45L12.725,6.925" fill="none" stroke="#3a8ed6" stroke-width="1"/></svg><div class="t" style="left:383.50px;top:110.01px;font-size:9.5px;line-height:11.40px;color:#1e1e1e;transform:scaleX(0.8367);">Crop Pages...</div><div class="t" style="left:466.00px;top:110.01px;font-size:9.5px;line-height:11.40px;color:#1e1e1e;transform:scaleX(0.8330);">CTRL+SHIFT+T</div><svg class="a" style="left:365px;top:127px;" width="15" height="16" viewBox="0 0 15 16"><path d="M1.6,2.3 Q1.6,0.8 3.1,0.8 H9.9 L13.4,4.3 V13.700000000000001 Q13.4,15.200000000000001 11.9,15.200000000000001 H3.1 Q1.6,15.200000000000001 1.6,13.700000000000001 Z" fill="#fdfcf9" stroke="#6b6258" stroke-width="1.2" stroke-linejoin="round"/><path d="M9.9,0.8 L13.4,4.3 H10.700000000000001 Q9.9,4.3 9.9,3.5 Z" fill="#6b6258" stroke="#6b6258" stroke-width="1" stroke-linejoin="round"/><path d="M3.5,6.75H10.7M4.85,4.5V10.8H11.6M9.8,6.75V12.6M4.85,10.8L11.15,4.95" fill="none" stroke="#3a8ed6" stroke-width="1"/></svg><div class="t" style="left:383.50px;top:129.41px;font-size:9.5px;line-height:11.40px;color:#1e1e1e;transform:scaleX(0.8696);">Crop Page Tool</div><svg class="a" style="left:364px;top:146px;" width="17" height="17" viewBox="0 0 17 17"><path d="M3.5,4.0 Q3.5,2.5 5.0,2.5 H10.8 L14.0,5.7 V13.0 Q14.0,14.5 12.5,14.5 H5.0 Q3.5,14.5 3.5,13.0 Z" fill="#fdfcf9" stroke="#6b6258" stroke-width="1.2" stroke-linejoin="round"/><path d="M10.8,2.5 L14.0,5.7 H11.600000000000001 Q10.8,5.7 10.8,4.9 Z" fill="#6b6258" stroke="#6b6258" stroke-width="1" stroke-linejoin="round"/><path d="M5,7.625H11.8M6.275,5.5V11.45H12.649999999999999M10.95,7.625V13.149999999999999M6.275,11.45L12.225,5.925" fill="none" stroke="#3a8ed6" stroke-width="1"/><path d="M8.5,0V2M8.5,15V17M0.5,9H3M14,9H16.5" stroke="#3a8ed6" stroke-width="0.9"/></svg><div class="t" style="left:383.50px;top:148.71px;font-size:9.5px;line-height:11.40px;color:#1e1e1e;transform:scaleX(0.8789);">Remove Cropped Content</div>
</body></html>
